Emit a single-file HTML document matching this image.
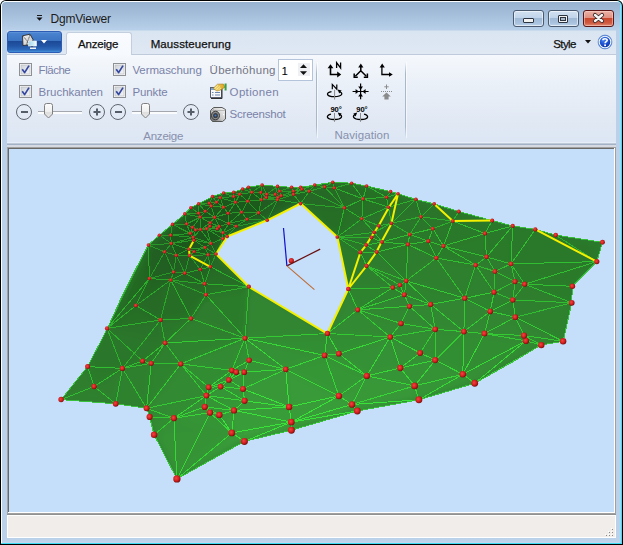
<!DOCTYPE html>
<html><head><meta charset="utf-8">
<style>
html,body{margin:0;padding:0;}
body{width:623px;height:545px;overflow:hidden;position:relative;background:#fff;font-family:"Liberation Sans",sans-serif;}
.a{position:absolute;}
.t{position:absolute;white-space:nowrap;font-family:"Liberation Sans",sans-serif;}
svg{position:absolute;overflow:visible;}
</style></head><body>
<!-- window frame -->
<div class="a" style="left:0;top:0;width:623px;height:545px;background:#000;border-radius:6px 6px 0 0;"></div>
<div class="a" style="left:1px;top:1px;width:621px;height:543px;background:#3fdcf6;border-radius:5px 5px 0 0;"></div>
<div class="a" style="left:1px;top:1px;width:620px;height:542px;background:#fbfdff;border-radius:5px 5px 0 0;"></div>
<div class="a" style="left:2px;top:2px;width:619px;height:541px;border-radius:4px 4px 0 0;background:linear-gradient(to bottom,#97b2cf 0px,#a9c2de 16px,#b8d0e9 28px,#bad1e9 60px,#bbd1e9 520px,#bcd2ea 539px,#c4d8ee 541px);"></div>
<div class="a" style="left:620px;top:5px;width:1px;height:538px;background:#a9d3f2;"></div>

<!-- quick access glyph -->
<div class="a" style="left:37px;top:15px;width:5px;height:1px;background:#1a1a1a;"></div>
<svg style="left:36px;top:17px" width="8" height="5"><path d="M0.5 0.5 H6.5 L3.5 3.8 Z" fill="#111"/></svg>

<!-- caption buttons -->
<div class="a" style="left:513px;top:10px;width:29px;height:15px;border:1px solid #4a5a70;border-radius:3px;background:linear-gradient(to bottom,#d2e1f0 0,#c0d4ea 7px,#9fb9d6 7px,#a9c2de 12px,#bcd3ea 15px);box-shadow:inset 0 0 0 1px rgba(255,255,255,0.55);"></div>
<div class="a" style="left:523px;top:18px;width:9px;height:3px;border:1px solid #2c3440;border-radius:1px;background:#f2f2f2;"></div>
<div class="a" style="left:548px;top:10px;width:29px;height:15px;border:1px solid #4a5a70;border-radius:3px;background:linear-gradient(to bottom,#d2e1f0 0,#c0d4ea 7px,#9fb9d6 7px,#a9c2de 12px,#bcd3ea 15px);box-shadow:inset 0 0 0 1px rgba(255,255,255,0.55);"></div>
<div class="a" style="left:558px;top:15px;width:8px;height:6px;border:1px solid #2c3440;border-radius:1px;background:#f2f2f2;"></div>
<div class="a" style="left:560px;top:17px;width:4px;height:2px;border:1px solid #2c3440;background:#aab8c8;"></div>
<div class="a" style="left:583px;top:10px;width:29px;height:15px;border:1px solid #5a1616;border-radius:3px;background:linear-gradient(to bottom,#eab2a6 0,#df8f80 7px,#c8462c 7px,#cf5a40 12px,#e28a74 15px);box-shadow:inset 0 0 0 1px rgba(255,220,210,0.5);"></div>
<svg style="left:592px;top:13px" width="13" height="10"><path d="M3 2 L10 8 M10 2 L3 8" stroke="#3a2a2a" stroke-width="4.2" stroke-linecap="round"/><path d="M3 2 L10 8 M10 2 L3 8" stroke="#f6f6f6" stroke-width="2.4" stroke-linecap="round"/></svg>

<!-- tab row -->
<div class="a" style="left:7px;top:30px;width:609px;height:1px;background:#c9daec;"></div>
<div class="a" style="left:7px;top:31px;width:609px;height:24px;background:linear-gradient(to bottom,#dae5f2,#dfe8f3);"></div>
<div class="a" style="left:7px;top:54px;width:609px;height:1px;background:#bfcbdb;"></div>
<!-- app button -->
<div class="a" style="left:7px;top:31px;width:53px;height:20px;border:1px solid #2c5cb4;border-radius:3px;background:linear-gradient(to bottom,#6a9ede 0,#4a84d0 1px,#3a74c2 9px,#1c4996 9px,#2256a6 14px,#2f6cbc 18px,#4592dc 20px);"></div>
<svg style="left:18px;top:31px" width="22" height="22">
 <defs><linearGradient id="envg" x1="0" y1="0" x2="1" y2="1"><stop offset="0" stop-color="#f4f4f4"/><stop offset="1" stop-color="#c4c4c4"/></linearGradient>
 <linearGradient id="mong" x1="0" y1="0" x2="1" y2="0"><stop offset="0" stop-color="#a8d8ee"/><stop offset="0.6" stop-color="#c8ecf8"/><stop offset="1" stop-color="#ffffff"/></linearGradient></defs>
 <path d="M4.5 4.8 L12 3.2 L15 8.5 L14 13.5 L5 14.5 Z" fill="url(#envg)" stroke="#2a2a2a" stroke-width="0.9"/>
 <path d="M5.5 5.5 L11 12.5 M12 4 L8.5 13.5" stroke="#3a3a3a" stroke-width="0.8" stroke-dasharray="1.2 0.6"/>
 <rect x="10.5" y="10" width="8" height="5" fill="url(#mong)" stroke="#f0f0f0" stroke-width="0.6"/>
 <path d="M14 15 V16.5" stroke="#333" stroke-width="1"/>
 <rect x="12" y="16.5" width="6" height="1.5" fill="#f4f4f4"/>
</svg>
<svg style="left:41px;top:40px" width="7" height="4"><path d="M0 0 H6 L3 3.5 Z" fill="#fff"/></svg>
<!-- selected tab -->
<div class="a" style="left:66px;top:32px;width:64px;height:23px;border:1px solid #c3cfdf;border-bottom:none;border-radius:3px 3px 0 0;background:linear-gradient(to bottom,#f9fbfe,#f6f9fd);"></div>
<!-- style dropdown + help -->
<svg style="left:585px;top:40px" width="7" height="4"><path d="M0 0 H6 L3 3.5 Z" fill="#111"/></svg>
<svg style="left:597px;top:34px" width="16" height="16">
 <defs><radialGradient id="hg" cx="0.4" cy="0.3" r="0.75"><stop offset="0" stop-color="#4a86f0"/><stop offset="0.55" stop-color="#1c4fd0"/><stop offset="1" stop-color="#0a2c9a"/></radialGradient></defs>
 <circle cx="8" cy="8" r="6.9" fill="#2f66c8" stroke="#5a86d0" stroke-width="0.8"/>
 <circle cx="8" cy="8" r="5.8" fill="url(#hg)" stroke="#f4f8ff" stroke-width="1.1"/>
 <path d="M5.9 6.2 C5.9 4.2 10.2 4.2 10.2 6.2 C10.2 7.6 8.1 7.7 8.1 9.3" stroke="#fff" stroke-width="1.6" fill="none"/>
 <rect x="7.2" y="10.4" width="1.8" height="1.7" fill="#fff"/>
</svg>

<!-- ribbon body -->
<div class="a" style="left:7px;top:55px;width:609px;height:88px;background:linear-gradient(to bottom,#f5f8fc 0,#eaf0f8 30px,#e0e8f4 70px,#dce6f4 88px);"></div>
<div class="a" style="left:66px;top:54px;width:64px;height:1px;background:#f6f9fd;"></div>
<div class="a" style="left:7px;top:142px;width:609px;height:1px;background:#e6eef9;"></div>
<div class="a" style="left:7px;top:143px;width:609px;height:1px;background:#bfcad9;"></div>
<div class="a" style="left:7px;top:144px;width:609px;height:1px;background:#a3b2c6;"></div>
<div class="a" style="left:7px;top:145px;width:609px;height:2px;background:#d6dae2;"></div>
<!-- group separators -->
<div class="a" style="left:316px;top:62px;width:1px;height:76px;background:linear-gradient(to bottom,rgba(160,178,200,0),#a8b8cc 15%,#a8b8cc 85%,rgba(160,178,200,0));"></div>
<div class="a" style="left:317px;top:62px;width:1px;height:76px;background:rgba(255,255,255,0.6);"></div>
<div class="a" style="left:405px;top:62px;width:1px;height:76px;background:linear-gradient(to bottom,rgba(160,178,200,0),#a8b8cc 15%,#a8b8cc 85%,rgba(160,178,200,0));"></div>
<div class="a" style="left:406px;top:62px;width:1px;height:76px;background:rgba(255,255,255,0.6);"></div>

<!-- checkboxes -->
<svg style="left:19px;top:63px" width="13" height="13"><use href="#cb"/></svg>
<svg style="left:19px;top:85px" width="13" height="13"><use href="#cb"/></svg>
<svg style="left:113px;top:63px" width="13" height="13"><use href="#cb"/></svg>
<svg style="left:113px;top:85px" width="13" height="13"><use href="#cb"/></svg>
<svg width="0" height="0" style="left:0;top:0">
 <defs>
  <linearGradient id="cbg" x1="0" y1="0" x2="1" y2="1"><stop offset="0" stop-color="#cfd3d8"/><stop offset="1" stop-color="#f4f5f6"/></linearGradient>
  <g id="cb">
   <rect x="0.5" y="0.5" width="12" height="12" fill="#fafafa" stroke="#8e9094"/>
   <rect x="2" y="2" width="9" height="9" fill="url(#cbg)" stroke="#b5b8bd" stroke-width="0.6"/>
   <path d="M3.2 6.3 L5.6 9.6 L10 2.6" stroke="#3447a0" stroke-width="1.7" fill="none" stroke-linejoin="round"/>
  </g>
  <g id="minus"><circle cx="8" cy="8" r="7.5" fill="none" stroke="#5f6670" stroke-width="1"/><rect x="5" y="7" width="7" height="2" fill="#555d68"/></g>
  <g id="plus"><circle cx="8" cy="8" r="7.5" fill="none" stroke="#5f6670" stroke-width="1"/><rect x="4.5" y="7" width="7" height="2" fill="#555d68"/><rect x="7" y="4.5" width="2" height="7" fill="#555d68"/></g>
  <linearGradient id="thg" x1="0" y1="0" x2="0" y2="1"><stop offset="0" stop-color="#fcfcfc"/><stop offset="0.55" stop-color="#f0f0f0"/><stop offset="0.6" stop-color="#dedede"/><stop offset="1" stop-color="#e8e8e8"/></linearGradient>
  <g id="thumb"><path d="M0.5 2.5 Q0.5 0.5 2.5 0.5 H6.5 Q8.5 0.5 8.5 2.5 V11 L4.5 15 L0.5 11 Z" fill="url(#thg)" stroke="#7f7f7f" stroke-width="1"/></g>
 </defs>
</svg>
<!-- zoom rows -->
<svg style="left:16px;top:104px" width="16" height="16"><use href="#minus"/></svg>
<div class="a" style="left:38px;top:111px;width:44px;height:1px;background:#a4a8ae;"></div>
<div class="a" style="left:38px;top:112px;width:44px;height:2px;background:#fafbfc;"></div>
<svg style="left:44px;top:103px" width="9" height="16"><use href="#thumb"/></svg>
<svg style="left:89px;top:104px" width="16" height="16"><use href="#plus"/></svg>
<svg style="left:110px;top:104px" width="16" height="16"><use href="#minus"/></svg>
<div class="a" style="left:132px;top:111px;width:45px;height:1px;background:#a4a8ae;"></div>
<div class="a" style="left:132px;top:112px;width:45px;height:2px;background:#fafbfc;"></div>
<svg style="left:141px;top:103px" width="9" height="16"><use href="#thumb"/></svg>
<svg style="left:183px;top:104px" width="16" height="16"><use href="#plus"/></svg>

<!-- spin box -->
<div class="a" style="left:278px;top:59px;width:33px;height:20px;border:1px solid #b4c4da;background:#fff;"></div>
<div class="a" style="left:298px;top:63px;width:12px;height:13px;background:#eef0f4;"></div>
<svg style="left:300px;top:64px" width="8" height="12"><path d="M3.5 0.3 L7 4 H0 Z" fill="#111"/><path d="M0 7.3 H7 L3.5 11 Z" fill="#111"/></svg>

<!-- options icon -->
<svg style="left:209px;top:83px" width="19" height="17">
 <defs><linearGradient id="handg" x1="0" y1="0" x2="1" y2="0"><stop offset="0" stop-color="#f6e27a"/><stop offset="1" stop-color="#d8a020"/></linearGradient></defs>
 <rect x="1.5" y="4.5" width="11" height="10" fill="#f8f8f8" stroke="#5a6070" stroke-width="1"/>
 <path d="M13 5 V15.5 H2" stroke="#303030" stroke-width="1" fill="none"/>
 <rect x="2" y="5" width="10" height="2" fill="#7aa4dc"/>
 <path d="M3 9.5 H4.5 M6 9.5 H11 M3 12 H4.5 M6 12 H11" stroke="#6b88b0" stroke-width="1"/>
 <path d="M4 5.5 L8.5 1.2 L14.5 1 L16 4.2 L11.5 7 L8 8 Z" fill="url(#handg)" stroke="#a07818" stroke-width="0.6"/>
 <path d="M6 5 L9 2.5 M7.5 6.5 L11 3.5 M9.5 7 L12 5" stroke="#fff6c0" stroke-width="0.7"/>
 <rect x="15.6" y="0.5" width="2" height="7" fill="#3aa048"/>
</svg>
<!-- camera icon -->
<svg style="left:209px;top:106px" width="18" height="17">
 <defs><linearGradient id="camg" x1="1" y1="0" x2="0" y2="1"><stop offset="0" stop-color="#f8f8f8"/><stop offset="0.55" stop-color="#c8c8c8"/><stop offset="1" stop-color="#606060"/></linearGradient></defs>
 <path d="M1.5 4.5 L4.5 1.5 H13 L16.5 3.5 V13 L13.5 15.5 H3.5 L1.5 13 Z" fill="url(#camg)" stroke="#4a4a4a" stroke-width="0.9"/>
 <path d="M4.5 1.5 V4.5 H16.5 M4.5 4.5 L1.5 4.5" stroke="#9a9a9a" stroke-width="0.6" fill="none"/>
 <ellipse cx="6.5" cy="9.5" rx="4" ry="4.3" fill="#8a8a8a" stroke="#303030" stroke-width="0.9"/>
 <ellipse cx="6.5" cy="9.5" rx="2.4" ry="2.6" fill="#3a3e44"/>
 <circle cx="6.5" cy="9.5" r="1" fill="#3a7ad0"/>
 <rect x="14" y="8" width="1.2" height="1.2" fill="#fff"/>
</svg>

<!-- navigation icons -->
<svg style="left:0;top:0" width="623" height="545" fill="none" stroke="#000">
 <!-- icon1 -->
 <path d="M330.5 66.5 V74.5 H338.5" stroke-width="1.6"/>
 <path d="M327.6 68.2 L330.5 64.2 L333.4 68.2 Z M337.2 71.6 L341.2 74.5 L337.2 77.4 Z" fill="#000" stroke="none"/>
 <path d="M336.6 68 V62.6 L340.6 68 V62.6" stroke-width="1.3"/>
 <!-- icon2 -->
 <path d="M360.8 66 V70.8 L355.3 76.3 M360.8 70.8 L366.3 76.3" stroke-width="1.5"/>
 <path d="M358.2 67.4 L360.8 63.6 L363.4 67.4 Z" fill="#000" stroke="none"/>
 <path d="M354.2 73.6 V77.2 H357.8 M367.4 73.6 V77.2 H363.8" stroke-width="1.5"/>
 <!-- icon3 -->
 <path d="M381.9 66.5 V74.5 H390" stroke-width="1.3"/>
 <path d="M379.6 67.6 L382.2 63.6 L384.8 67.6 Z M389 72.2 L392.8 74.5 L389 76.8 Z" fill="#000" stroke="none"/>
 <!-- icon4 -->
 <path d="M332.3 89.2 V84.4 L336.8 89.2 V84.4" stroke-width="1.2"/>
 <path d="M331.5 91.6 C325.5 92.5 326 96.6 334.5 96.6 C343 96.6 343.2 92.5 339.5 91.8" stroke-width="1.3"/>
 <path d="M337.6 89.6 L341.6 90.6 L339.2 93.6 Z" fill="#000" stroke="none"/>
 <path d="M334.6 89.8 V99.5" stroke="#8a8a8a" stroke-width="1"/>
 <!-- icon5 -->
 <path d="M360.6 83.6 V99.2 M352.6 91.5 H368.6" stroke-width="1.2"/>
 <path d="M358.2 86.6 H363 L360.6 89.8 Z M358.2 96.4 H363 L360.6 93.2 Z M355.6 89.1 V93.9 L358.8 91.5 Z M365.6 89.1 V93.9 L362.4 91.5 Z" fill="#000" stroke="none"/>
 <!-- icon6 -->
 <path d="M386.5 84.5 V89 M384.3 86.8 H388.7" stroke="#8c8c8c" stroke-width="1"/>
 <path d="M381 91.5 H392" stroke="#8c8c8c" stroke-width="1" stroke-dasharray="1 1"/>
 <path d="M386.5 92.6 L390.8 96.4 H388.6 V99.4 H384.4 V96.4 H382.2 Z" fill="#8a8a8a" stroke="none"/>
 <!-- icon7 -->
 <text x="330.5" y="111.8" font-family="Liberation Sans" font-size="7.6" font-weight="bold" fill="#000" stroke="none" letter-spacing="-0.1">90°</text>
 <path d="M331 114.2 C325.5 115.2 326 119.5 334.3 119.5 C342.6 119.5 343 115.4 339.4 114.4" stroke-width="1.3"/>
 <path d="M337.8 112.4 L341.6 113.4 L339.4 116.4 Z" fill="#000" stroke="none"/>
 <path d="M334.5 113 V121.8" stroke="#8a8a8a" stroke-width="1"/>
 <!-- icon8 -->
 <text x="356.3" y="111.8" font-family="Liberation Sans" font-size="7.6" font-weight="bold" fill="#000" stroke="none" letter-spacing="-0.1">90°</text>
 <path d="M364 114.2 C369.5 115.2 369 119.5 360.7 119.5 C352.4 119.5 352 115.4 355.6 114.4" stroke-width="1.3"/>
 <path d="M357.2 112.4 L353.4 113.4 L355.6 116.4 Z" fill="#000" stroke="none"/>
 <path d="M360.5 113 V121.8" stroke="#8a8a8a" stroke-width="1"/>
</svg>

<!-- viewport border -->
<div class="a" style="left:7px;top:147px;width:609px;height:367px;background:#a0a0a0;"></div>
<div class="a" style="left:8px;top:148px;width:607px;height:365px;background:#fff;"></div>
<div class="a" style="left:8px;top:148px;width:606px;height:364px;background:#696969;"></div>
<div class="a" style="left:9px;top:149px;width:605px;height:363px;background:#e3e3e3;"></div>
<div class="a" style="left:9px;top:149px;width:605px;height:363px;background:#c5dffb;overflow:hidden;">
<svg style="left:0;top:0" width="605" height="363" viewBox="0 0 605 363">
<defs>
<clipPath id="mc"><path d="M52.1,250.6 L78.6,217.6 L98.5,179.4 L113.5,146.0 L122.7,127.7 L139.5,95.8 L150.4,86.2 L163.4,75.4 L176.0,64.9 L181.7,58.6 L189.4,54.9 L203.5,47.6 L214.6,44.0 L224.7,43.3 L233.6,40.1 L239.4,38.2 L253.1,36.1 L268.5,37.4 L282.6,38.3 L291.6,38.3 L305.7,36.1 L323.7,33.2 L342.6,34.2 L357.6,37.0 L381.6,42.6 L389.0,44.7 L406.9,50.4 L425.2,54.9 L449.8,62.5 L483.2,71.6 L503.7,76.9 L526.3,80.4 L546.7,86.1 L593.5,93.3 L587.8,112.6 L563.4,137.3 L562.7,153.8 L556.4,182.7 L554.1,192.3 L531.8,196.1 L507.0,211.0 L465.7,234.3 L409.9,250.8 L348.3,262.0 L282.4,281.2 L235.4,292.4 L167.9,329.9 L145.1,285.8 L140.6,267.9 L137.6,259.3 L106.7,254.8 Z M291.7,54.5 L328.4,88.0 L339.3,140.0 L318.2,184.7 L239.9,137.8 L207.0,105.0 L218.2,87.5 L258.2,71.3 Z" clip-rule="evenodd" shape-rendering="crispEdges"/></clipPath>
<linearGradient id="gbase" gradientUnits="userSpaceOnUse" x1="0" y1="40" x2="0" y2="330">
<stop offset="0" stop-color="#24622a"/><stop offset="0.35" stop-color="#2b7a2e"/><stop offset="1" stop-color="#36903a"/></linearGradient>
<radialGradient id="gdark" gradientUnits="userSpaceOnUse" cx="230" cy="55" r="120"><stop offset="0" stop-color="#16461a" stop-opacity="0.9"/><stop offset="1" stop-color="#16461a" stop-opacity="0"/></radialGradient>
<radialGradient id="glight" gradientUnits="userSpaceOnUse" cx="390" cy="210" r="170"><stop offset="0" stop-color="#45a845" stop-opacity="0.7"/><stop offset="1" stop-color="#45a845" stop-opacity="0"/></radialGradient>
<radialGradient id="gright" gradientUnits="userSpaceOnUse" cx="540" cy="130" r="90"><stop offset="0" stop-color="#1e5c22" stop-opacity="0.6"/><stop offset="1" stop-color="#1e5c22" stop-opacity="0"/></radialGradient>
</defs>
<g clip-path="url(#mc)">
<filter id="fb" filterUnits="userSpaceOnUse" x="0" y="0" width="605" height="363"><feGaussianBlur stdDeviation="4"/></filter>
<g filter="url(#fb)">
<rect x="0" y="0" width="605" height="363" fill="#2e7e30"/>
<path d="M222.8,283.9L167.9,329.9L145.1,285.8Z" fill="#359335" stroke="#359335" stroke-width="0.6"/><path d="M222.8,221.4L171.8,214.9L236.0,189.2Z" fill="#328b32" stroke="#328b32" stroke-width="0.6"/><path d="M477.5,107.9L502.0,114.9L486.0,122.5Z" fill="#2d7d2d" stroke="#2d7d2d" stroke-width="0.6"/><path d="M126.9,156.5L151.6,170.9L98.1,179.4Z" fill="#276f27" stroke="#276f27" stroke-width="0.6"/><path d="M140.4,129.5L98.1,179.4L139.4,96.1Z" fill="#246724" stroke="#246724" stroke-width="0.6"/><path d="M140.4,129.5L126.9,156.5L98.1,179.4Z" fill="#266c26" stroke="#266c26" stroke-width="0.6"/><path d="M291.6,54.6L335.4,58.9L328.3,88.0Z" fill="#276d27" stroke="#276d27" stroke-width="0.6"/><path d="M351.4,103.4L339.3,140.0L328.3,88.0Z" fill="#2c7a2c" stroke="#2c7a2c" stroke-width="0.6"/><path d="M276.7,220.3L240.1,211.3L236.0,189.2Z" fill="#349034" stroke="#349034" stroke-width="0.6"/><path d="M240.1,211.3L222.8,221.4L236.0,189.2Z" fill="#338e33" stroke="#338e33" stroke-width="0.6"/><path d="M164.9,269.2L222.8,283.9L145.1,285.8Z" fill="#349134" stroke="#349134" stroke-width="0.6"/><path d="M222.8,221.4L199.7,238.3L171.8,214.9Z" fill="#338d33" stroke="#338d33" stroke-width="0.6"/><path d="M199.7,238.3L197.4,246.6L171.8,214.9Z" fill="#338d33" stroke="#338d33" stroke-width="0.6"/><path d="M454.9,182.6L426.2,211.1L426.2,180.3Z" fill="#328c32" stroke="#328c32" stroke-width="0.6"/><path d="M454.9,182.6L481.2,162.4L475.5,184.6Z" fill="#318831" stroke="#318831" stroke-width="0.6"/><path d="M409.9,250.8L453.8,225.3L465.7,234.3Z" fill="#369436" stroke="#369436" stroke-width="0.6"/><path d="M453.8,225.3L516.9,191.9L465.7,234.3Z" fill="#349034" stroke="#349034" stroke-width="0.6"/><path d="M516.9,191.9L453.8,225.3L475.5,184.6Z" fill="#328c32" stroke="#328c32" stroke-width="0.6"/><path d="M454.9,182.6L453.8,225.3L426.2,211.1Z" fill="#338e33" stroke="#338e33" stroke-width="0.6"/><path d="M453.8,225.3L454.9,182.6L475.5,184.6Z" fill="#328c32" stroke="#328c32" stroke-width="0.6"/><path d="M197.0,145.8L236.0,189.2L182.0,169.5Z" fill="#2d7d2d" stroke="#2d7d2d" stroke-width="0.6"/><path d="M197.0,145.8L239.8,137.7L236.0,189.2Z" fill="#2c7c2c" stroke="#2c7c2c" stroke-width="0.6"/><path d="M381.2,188.0L391.3,219.0L357.8,226.9Z" fill="#349134" stroke="#349134" stroke-width="0.6"/><path d="M426.2,211.1L411.1,204.0L426.2,180.3Z" fill="#338e33" stroke="#338e33" stroke-width="0.6"/><path d="M411.1,204.0L381.2,188.0L426.2,180.3Z" fill="#328c32" stroke="#328c32" stroke-width="0.6"/><path d="M391.3,219.0L411.1,204.0L426.2,211.1Z" fill="#349034" stroke="#349034" stroke-width="0.6"/><path d="M411.1,204.0L391.3,219.0L381.2,188.0Z" fill="#348f34" stroke="#348f34" stroke-width="0.6"/><path d="M329.9,204.7L381.2,188.0L357.8,226.9Z" fill="#349134" stroke="#349134" stroke-width="0.6"/><path d="M427.3,109.0L397.2,131.9L398.9,95.4Z" fill="#2d7d2d" stroke="#2d7d2d" stroke-width="0.6"/><path d="M502.0,114.9L587.8,112.6L563.4,137.3Z" fill="#2b7a2b" stroke="#2b7a2b" stroke-width="0.6"/><path d="M587.8,112.6L546.7,86.1L593.5,93.3Z" fill="#2a772a" stroke="#2a772a" stroke-width="0.6"/><path d="M546.7,86.1L587.8,112.6L502.0,114.9Z" fill="#2b782b" stroke="#2b782b" stroke-width="0.6"/><path d="M503.7,76.9L502.0,114.9L477.5,107.9Z" fill="#2c7a2c" stroke="#2c7a2c" stroke-width="0.6"/><path d="M151.6,170.9L156.1,194.0L98.1,179.4Z" fill="#297329" stroke="#297329" stroke-width="0.6"/><path d="M142.2,214.3L156.1,194.0L171.8,214.9Z" fill="#2d7f2d" stroke="#2d7f2d" stroke-width="0.6"/><path d="M156.1,194.0L151.6,170.9L182.0,169.5Z" fill="#2a772a" stroke="#2a772a" stroke-width="0.6"/><path d="M236.0,189.2L156.1,194.0L182.0,169.5Z" fill="#2e802e" stroke="#2e802e" stroke-width="0.6"/><path d="M171.8,214.9L156.1,194.0L236.0,189.2Z" fill="#2f842f" stroke="#2f842f" stroke-width="0.6"/><path d="M335.4,58.9L352.8,69.8L328.3,88.0Z" fill="#287128" stroke="#287128" stroke-width="0.6"/><path d="M352.8,69.8L379.4,58.2L369.8,76.8Z" fill="#297329" stroke="#297329" stroke-width="0.6"/><path d="M300.2,42.2L335.4,58.9L291.6,54.6Z" fill="#256825" stroke="#256825" stroke-width="0.6"/><path d="M300.2,42.2L291.6,54.6L284.5,45.4Z" fill="#236323" stroke="#236323" stroke-width="0.6"/><path d="M323.7,33.2L342.6,34.2L325.3,39.0Z" fill="#256925" stroke="#256925" stroke-width="0.6"/><path d="M362.5,88.5L365.2,83.3L373.0,93.0Z" fill="#2a772a" stroke="#2a772a" stroke-width="0.6"/><path d="M365.2,83.3L352.8,69.8L369.8,76.8Z" fill="#297429" stroke="#297429" stroke-width="0.6"/><path d="M365.2,83.3L362.5,88.5L328.3,88.0Z" fill="#2a762a" stroke="#2a762a" stroke-width="0.6"/><path d="M352.8,69.8L365.2,83.3L328.3,88.0Z" fill="#297429" stroke="#297429" stroke-width="0.6"/><path d="M362.5,88.5L357.2,96.1L328.3,88.0Z" fill="#2a762a" stroke="#2a762a" stroke-width="0.6"/><path d="M357.2,96.1L351.4,103.4L328.3,88.0Z" fill="#2b772b" stroke="#2b772b" stroke-width="0.6"/><path d="M357.2,96.1L362.5,88.5L373.0,93.0Z" fill="#2b782b" stroke="#2b782b" stroke-width="0.6"/><path d="M351.4,103.4L357.6,116.9L339.3,140.0Z" fill="#2d7d2d" stroke="#2d7d2d" stroke-width="0.6"/><path d="M379.4,58.2L382.4,74.3L369.8,76.8Z" fill="#297429" stroke="#297429" stroke-width="0.6"/><path d="M382.4,74.3L365.2,83.3L369.8,76.8Z" fill="#2a752a" stroke="#2a752a" stroke-width="0.6"/><path d="M365.2,83.3L382.4,74.3L373.0,93.0Z" fill="#2a762a" stroke="#2a762a" stroke-width="0.6"/><path d="M443.8,72.1L449.8,62.5L483.2,71.6Z" fill="#2a762a" stroke="#2a762a" stroke-width="0.6"/><path d="M449.8,62.5L443.8,72.1L425.2,54.9Z" fill="#297429" stroke="#297429" stroke-width="0.6"/><path d="M475.9,84.5L443.8,72.1L483.2,71.6Z" fill="#2a772a" stroke="#2a772a" stroke-width="0.6"/><path d="M503.7,76.9L475.9,84.5L483.2,71.6Z" fill="#2a772a" stroke="#2a772a" stroke-width="0.6"/><path d="M475.9,84.5L503.7,76.9L477.5,107.9Z" fill="#2b792b" stroke="#2b792b" stroke-width="0.6"/><path d="M113.4,219.4L78.6,217.6L98.1,179.4Z" fill="#2a762a" stroke="#2a762a" stroke-width="0.6"/><path d="M240.1,211.3L235.2,223.2L222.8,221.4Z" fill="#349134" stroke="#349134" stroke-width="0.6"/><path d="M235.2,223.2L276.7,220.3L234.0,239.9Z" fill="#369536" stroke="#369536" stroke-width="0.6"/><path d="M235.2,223.2L240.1,211.3L276.7,220.3Z" fill="#359335" stroke="#359335" stroke-width="0.6"/><path d="M140.6,267.9L164.9,269.2L145.1,285.8Z" fill="#328c32" stroke="#328c32" stroke-width="0.6"/><path d="M235.6,251.8L225.0,261.4L197.4,246.6Z" fill="#369736" stroke="#369736" stroke-width="0.6"/><path d="M164.9,269.2L201.0,263.7L222.8,283.9Z" fill="#369536" stroke="#369536" stroke-width="0.6"/><path d="M219.9,230.9L199.7,238.3L222.8,221.4Z" fill="#349134" stroke="#349134" stroke-width="0.6"/><path d="M219.9,230.9L235.2,223.2L234.0,239.9Z" fill="#359435" stroke="#359435" stroke-width="0.6"/><path d="M516.9,191.9L532.3,196.1L465.7,234.3Z" fill="#338c33" stroke="#338c33" stroke-width="0.6"/><path d="M427.3,109.0L455.8,149.2L397.2,131.9Z" fill="#2e802e" stroke="#2e802e" stroke-width="0.6"/><path d="M454.9,182.6L455.8,149.2L481.2,162.4Z" fill="#308630" stroke="#308630" stroke-width="0.6"/><path d="M481.2,162.4L506.3,168.2L475.5,184.6Z" fill="#308630" stroke="#308630" stroke-width="0.6"/><path d="M453.8,225.3L405.6,236.9L426.2,211.1Z" fill="#359235" stroke="#359235" stroke-width="0.6"/><path d="M405.6,236.9L453.8,225.3L409.9,250.8Z" fill="#369536" stroke="#369536" stroke-width="0.6"/><path d="M405.6,236.9L391.3,219.0L426.2,211.1Z" fill="#359335" stroke="#359335" stroke-width="0.6"/><path d="M391.3,219.0L405.6,236.9L357.8,226.9Z" fill="#369436" stroke="#369436" stroke-width="0.6"/><path d="M218.2,87.5L207.0,105.0L213.8,89.7Z" fill="#205b20" stroke="#205b20" stroke-width="0.6"/><path d="M201.4,117.8L207.0,105.0L239.8,137.7Z" fill="#256825" stroke="#256825" stroke-width="0.6"/><path d="M140.4,129.5L161.7,131.1L126.9,156.5Z" fill="#246524" stroke="#246524" stroke-width="0.6"/><path d="M161.7,131.1L151.6,170.9L126.9,156.5Z" fill="#266a26" stroke="#266a26" stroke-width="0.6"/><path d="M151.6,170.9L161.7,131.1L182.0,169.5Z" fill="#276e27" stroke="#276e27" stroke-width="0.6"/><path d="M161.7,131.1L197.0,145.8L182.0,169.5Z" fill="#276e27" stroke="#276e27" stroke-width="0.6"/><path d="M195.6,134.8L161.7,131.1L175.8,124.2Z" fill="#236323" stroke="#236323" stroke-width="0.6"/><path d="M161.7,131.1L195.6,134.8L197.0,145.8Z" fill="#256925" stroke="#256925" stroke-width="0.6"/><path d="M195.6,134.8L201.4,117.8L239.8,137.7Z" fill="#276d27" stroke="#276d27" stroke-width="0.6"/><path d="M197.0,145.8L195.6,134.8L239.8,137.7Z" fill="#287128" stroke="#287128" stroke-width="0.6"/><path d="M315.6,206.4L329.9,204.7L357.8,226.9Z" fill="#359335" stroke="#359335" stroke-width="0.6"/><path d="M315.6,206.4L276.7,220.3L236.0,189.2Z" fill="#349134" stroke="#349134" stroke-width="0.6"/><path d="M526.3,80.4L546.7,86.1L502.0,114.9Z" fill="#2b782b" stroke="#2b782b" stroke-width="0.6"/><path d="M503.7,76.9L526.3,80.4L502.0,114.9Z" fill="#2b782b" stroke="#2b782b" stroke-width="0.6"/><path d="M222.8,283.9L235.4,292.4L167.9,329.9Z" fill="#389b38" stroke="#389b38" stroke-width="0.6"/><path d="M225.0,261.4L282.3,273.1L222.8,283.9Z" fill="#399d39" stroke="#399d39" stroke-width="0.6"/><path d="M282.3,273.1L235.4,292.4L222.8,283.9Z" fill="#3a9f3a" stroke="#3a9f3a" stroke-width="0.6"/><path d="M235.4,292.4L282.3,273.1L282.4,281.2Z" fill="#3aa13a" stroke="#3aa13a" stroke-width="0.6"/><path d="M282.4,281.2L282.3,273.1L348.3,262.0Z" fill="#3a9f3a" stroke="#3a9f3a" stroke-width="0.6"/><path d="M163.5,75.4L175.8,64.9L177.6,75.0Z" fill="#205a20" stroke="#205a20" stroke-width="0.6"/><path d="M180.6,106.6L167.3,106.4L179.9,100.2Z" fill="#1f591f" stroke="#1f591f" stroke-width="0.6"/><path d="M167.3,106.4L180.6,106.6L175.8,124.2Z" fill="#205c20" stroke="#205c20" stroke-width="0.6"/><path d="M354.1,49.9L352.8,69.8L335.4,58.9Z" fill="#287028" stroke="#287028" stroke-width="0.6"/><path d="M352.8,69.8L354.1,49.9L379.4,58.2Z" fill="#287128" stroke="#287128" stroke-width="0.6"/><path d="M354.1,49.9L342.6,34.2L357.6,37.0Z" fill="#266c26" stroke="#266c26" stroke-width="0.6"/><path d="M354.1,49.9L335.4,58.9L325.3,39.0Z" fill="#276d27" stroke="#276d27" stroke-width="0.6"/><path d="M342.6,34.2L354.1,49.9L325.3,39.0Z" fill="#266b26" stroke="#266b26" stroke-width="0.6"/><path d="M315.7,37.9L300.2,42.2L305.7,36.1Z" fill="#246624" stroke="#246624" stroke-width="0.6"/><path d="M315.7,37.9L323.7,33.2L325.3,39.0Z" fill="#256825" stroke="#256825" stroke-width="0.6"/><path d="M323.7,33.2L315.7,37.9L305.7,36.1Z" fill="#246724" stroke="#246724" stroke-width="0.6"/><path d="M335.4,58.9L315.7,37.9L325.3,39.0Z" fill="#266a26" stroke="#266a26" stroke-width="0.6"/><path d="M300.2,42.2L315.7,37.9L335.4,58.9Z" fill="#256925" stroke="#256925" stroke-width="0.6"/><path d="M218.2,87.5L227.2,77.3L258.2,71.3Z" fill="#205c20" stroke="#205c20" stroke-width="0.6"/><path d="M189.6,54.9L181.9,58.7L203.5,47.6Z" fill="#1f581f" stroke="#1f581f" stroke-width="0.6"/><path d="M367.7,103.0L357.2,96.1L373.0,93.0Z" fill="#2b792b" stroke="#2b792b" stroke-width="0.6"/><path d="M357.2,96.1L367.7,103.0L351.4,103.4Z" fill="#2b792b" stroke="#2b792b" stroke-width="0.6"/><path d="M367.7,103.0L357.6,116.9L351.4,103.4Z" fill="#2c7b2c" stroke="#2c7b2c" stroke-width="0.6"/><path d="M367.7,103.0L373.0,93.0L398.9,95.4Z" fill="#2b792b" stroke="#2b792b" stroke-width="0.6"/><path d="M397.2,131.9L367.7,103.0L398.9,95.4Z" fill="#2c7c2c" stroke="#2c7c2c" stroke-width="0.6"/><path d="M357.6,116.9L367.7,103.0L397.2,131.9Z" fill="#2d7d2d" stroke="#2d7d2d" stroke-width="0.6"/><path d="M389.0,44.7L406.9,50.4L379.4,58.2Z" fill="#287128" stroke="#287128" stroke-width="0.6"/><path d="M85.1,237.5L113.4,219.4L106.7,254.8Z" fill="#2d7e2d" stroke="#2d7e2d" stroke-width="0.6"/><path d="M113.4,219.4L85.1,237.5L78.6,217.6Z" fill="#2c7a2c" stroke="#2c7a2c" stroke-width="0.6"/><path d="M85.1,237.5L106.7,254.8L52.1,250.6Z" fill="#2e812e" stroke="#2e812e" stroke-width="0.6"/><path d="M78.6,217.6L85.1,237.5L52.1,250.6Z" fill="#2d7e2d" stroke="#2d7e2d" stroke-width="0.6"/><path d="M133.6,212.0L113.4,219.4L98.1,179.4Z" fill="#2a762a" stroke="#2a762a" stroke-width="0.6"/><path d="M113.4,219.4L133.6,212.0L142.2,214.3Z" fill="#2c7b2c" stroke="#2c7b2c" stroke-width="0.6"/><path d="M156.1,194.0L133.6,212.0L98.1,179.4Z" fill="#2a762a" stroke="#2a762a" stroke-width="0.6"/><path d="M133.6,212.0L156.1,194.0L142.2,214.3Z" fill="#2c7b2c" stroke="#2c7b2c" stroke-width="0.6"/><path d="M113.4,219.4L137.6,259.3L106.7,254.8Z" fill="#2e822e" stroke="#2e822e" stroke-width="0.6"/><path d="M137.6,259.3L113.4,219.4L142.2,214.3Z" fill="#2e802e" stroke="#2e802e" stroke-width="0.6"/><path d="M137.6,259.3L142.2,214.3L171.8,214.9Z" fill="#2f832f" stroke="#2f832f" stroke-width="0.6"/><path d="M197.4,246.6L137.6,259.3L171.8,214.9Z" fill="#328a32" stroke="#328a32" stroke-width="0.6"/><path d="M164.9,269.2L137.6,259.3L197.4,246.6Z" fill="#338c33" stroke="#338c33" stroke-width="0.6"/><path d="M140.6,267.9L137.6,259.3L164.9,269.2Z" fill="#328a32" stroke="#328a32" stroke-width="0.6"/><path d="M225.0,261.4L195.8,257.9L197.4,246.6Z" fill="#369536" stroke="#369536" stroke-width="0.6"/><path d="M195.8,257.9L164.9,269.2L197.4,246.6Z" fill="#349134" stroke="#349134" stroke-width="0.6"/><path d="M195.8,257.9L201.0,263.7L164.9,269.2Z" fill="#349234" stroke="#349234" stroke-width="0.6"/><path d="M210.4,265.9L225.0,261.4L222.8,283.9Z" fill="#379937" stroke="#379937" stroke-width="0.6"/><path d="M201.0,263.7L210.4,265.9L222.8,283.9Z" fill="#379837" stroke="#379837" stroke-width="0.6"/><path d="M210.4,265.9L195.8,257.9L225.0,261.4Z" fill="#369636" stroke="#369636" stroke-width="0.6"/><path d="M195.8,257.9L210.4,265.9L201.0,263.7Z" fill="#369536" stroke="#369536" stroke-width="0.6"/><path d="M211.6,237.6L219.9,230.9L234.0,239.9Z" fill="#359435" stroke="#359435" stroke-width="0.6"/><path d="M219.9,230.9L211.6,237.6L199.7,238.3Z" fill="#359235" stroke="#359235" stroke-width="0.6"/><path d="M199.7,238.3L211.6,237.6L197.4,246.6Z" fill="#349134" stroke="#349134" stroke-width="0.6"/><path d="M235.6,251.8L211.6,237.6L234.0,239.9Z" fill="#369636" stroke="#369636" stroke-width="0.6"/><path d="M211.6,237.6L235.6,251.8L197.4,246.6Z" fill="#369436" stroke="#369436" stroke-width="0.6"/><path d="M235.2,223.2L227.3,223.2L222.8,221.4Z" fill="#349234" stroke="#349234" stroke-width="0.6"/><path d="M227.3,223.2L219.9,230.9L222.8,221.4Z" fill="#349234" stroke="#349234" stroke-width="0.6"/><path d="M219.9,230.9L227.3,223.2L235.2,223.2Z" fill="#359235" stroke="#359235" stroke-width="0.6"/><path d="M455.8,149.2L485.1,143.2L481.2,162.4Z" fill="#2f832f" stroke="#2f832f" stroke-width="0.6"/><path d="M466.6,116.1L455.8,149.2L427.3,109.0Z" fill="#2e7f2e" stroke="#2e7f2e" stroke-width="0.6"/><path d="M466.6,116.1L477.5,107.9L486.0,122.5Z" fill="#2d7d2d" stroke="#2d7d2d" stroke-width="0.6"/><path d="M485.1,143.2L466.6,116.1L486.0,122.5Z" fill="#2d7f2d" stroke="#2d7f2d" stroke-width="0.6"/><path d="M466.6,116.1L485.1,143.2L455.8,149.2Z" fill="#2e812e" stroke="#2e812e" stroke-width="0.6"/><path d="M455.8,149.2L421.7,155.4L397.2,131.9Z" fill="#2f832f" stroke="#2f832f" stroke-width="0.6"/><path d="M400.5,157.3L421.7,155.4L426.2,180.3Z" fill="#308730" stroke="#308730" stroke-width="0.6"/><path d="M421.7,155.4L454.9,182.6L426.2,180.3Z" fill="#318831" stroke="#318831" stroke-width="0.6"/><path d="M421.7,155.4L455.8,149.2L454.9,182.6Z" fill="#308630" stroke="#308630" stroke-width="0.6"/><path d="M515.0,186.5L516.9,191.9L475.5,184.6Z" fill="#318831" stroke="#318831" stroke-width="0.6"/><path d="M506.3,168.2L515.0,186.5L475.5,184.6Z" fill="#308730" stroke="#308730" stroke-width="0.6"/><path d="M515.0,186.5L506.3,168.2L554.1,192.3Z" fill="#308530" stroke="#308530" stroke-width="0.6"/><path d="M532.3,196.1L515.0,186.5L554.1,192.3Z" fill="#318731" stroke="#318731" stroke-width="0.6"/><path d="M515.0,186.5L532.3,196.1L516.9,191.9Z" fill="#318831" stroke="#318831" stroke-width="0.6"/><path d="M506.3,168.2L562.7,153.8L554.1,192.3Z" fill="#2f822f" stroke="#2f822f" stroke-width="0.6"/><path d="M164.6,123.0L161.7,131.1L140.4,129.5Z" fill="#226022" stroke="#226022" stroke-width="0.6"/><path d="M164.6,123.0L167.3,106.4L175.8,124.2Z" fill="#215d21" stroke="#215d21" stroke-width="0.6"/><path d="M161.7,131.1L164.6,123.0L175.8,124.2Z" fill="#226022" stroke="#226022" stroke-width="0.6"/><path d="M191.3,120.4L195.6,134.8L175.8,124.2Z" fill="#236423" stroke="#236423" stroke-width="0.6"/><path d="M195.6,134.8L191.3,120.4L201.4,117.8Z" fill="#246524" stroke="#246524" stroke-width="0.6"/><path d="M180.6,106.6L191.3,120.4L175.8,124.2Z" fill="#215e21" stroke="#215e21" stroke-width="0.6"/><path d="M329.9,204.7L318.4,184.5L381.2,188.0Z" fill="#338e33" stroke="#338e33" stroke-width="0.6"/><path d="M318.4,184.5L348.7,160.8L381.2,188.0Z" fill="#328b32" stroke="#328b32" stroke-width="0.6"/><path d="M315.6,206.4L318.4,184.5L329.9,204.7Z" fill="#349034" stroke="#349034" stroke-width="0.6"/><path d="M318.4,184.5L315.6,206.4L236.0,189.2Z" fill="#338e33" stroke="#338e33" stroke-width="0.6"/><path d="M239.8,137.7L318.4,184.5L236.0,189.2Z" fill="#308630" stroke="#308630" stroke-width="0.6"/><path d="M348.7,160.8L318.4,184.5L339.3,140.0Z" fill="#308730" stroke="#308730" stroke-width="0.6"/><path d="M348.7,160.8L392.0,174.4L381.2,188.0Z" fill="#318a31" stroke="#318a31" stroke-width="0.6"/><path d="M392.0,174.4L348.7,160.8L400.5,157.3Z" fill="#318731" stroke="#318731" stroke-width="0.6"/><path d="M381.2,188.0L392.0,174.4L426.2,180.3Z" fill="#328b32" stroke="#328b32" stroke-width="0.6"/><path d="M392.0,174.4L400.5,157.3L426.2,180.3Z" fill="#318831" stroke="#318831" stroke-width="0.6"/><path d="M383.7,138.6L348.7,160.8L339.3,140.0Z" fill="#2f842f" stroke="#2f842f" stroke-width="0.6"/><path d="M357.6,116.9L383.7,138.6L339.3,140.0Z" fill="#2e802e" stroke="#2e802e" stroke-width="0.6"/><path d="M329.9,246.9L315.6,206.4L357.8,226.9Z" fill="#369636" stroke="#369636" stroke-width="0.6"/><path d="M315.6,206.4L329.9,246.9L276.7,220.3Z" fill="#369636" stroke="#369636" stroke-width="0.6"/><path d="M161.7,86.2L150.4,86.2L163.5,75.4Z" fill="#215d21" stroke="#215d21" stroke-width="0.6"/><path d="M150.4,86.2L162.3,94.5L139.4,96.1Z" fill="#215e21" stroke="#215e21" stroke-width="0.6"/><path d="M162.3,94.5L150.4,86.2L161.7,86.2Z" fill="#205c20" stroke="#205c20" stroke-width="0.6"/><path d="M167.3,106.4L162.3,94.5L179.9,100.2Z" fill="#1f591f" stroke="#1f591f" stroke-width="0.6"/><path d="M162.3,94.5L161.7,86.2L184.2,88.4Z" fill="#1f591f" stroke="#1f591f" stroke-width="0.6"/><path d="M300.2,42.2L292.9,40.3L305.7,36.1Z" fill="#236423" stroke="#236423" stroke-width="0.6"/><path d="M292.9,40.3L291.6,38.3L305.7,36.1Z" fill="#236323" stroke="#236323" stroke-width="0.6"/><path d="M292.9,40.3L300.2,42.2L284.5,45.4Z" fill="#236323" stroke="#236323" stroke-width="0.6"/><path d="M257.8,45.4L268.5,37.4L266.3,45.4Z" fill="#205c20" stroke="#205c20" stroke-width="0.6"/><path d="M268.5,37.4L257.8,45.4L253.1,36.1Z" fill="#205b20" stroke="#205b20" stroke-width="0.6"/><path d="M257.8,45.4L251.8,43.5L253.1,36.1Z" fill="#205a20" stroke="#205a20" stroke-width="0.6"/><path d="M242.9,43.3L251.8,43.5L252.4,50.8Z" fill="#1f5a1f" stroke="#1f5a1f" stroke-width="0.6"/><path d="M239.4,38.2L242.9,43.3L233.6,40.1Z" fill="#1f581f" stroke="#1f581f" stroke-width="0.6"/><path d="M251.8,43.5L242.9,43.3L253.1,36.1Z" fill="#1f591f" stroke="#1f591f" stroke-width="0.6"/><path d="M242.9,43.3L239.4,38.2L253.1,36.1Z" fill="#1f591f" stroke="#1f591f" stroke-width="0.6"/><path d="M272.3,46.7L284.5,42.2L284.5,45.4Z" fill="#226022" stroke="#226022" stroke-width="0.6"/><path d="M284.5,42.2L292.9,40.3L284.5,45.4Z" fill="#226222" stroke="#226222" stroke-width="0.6"/><path d="M291.6,38.3L284.5,42.2L282.6,38.3Z" fill="#226122" stroke="#226122" stroke-width="0.6"/><path d="M292.9,40.3L284.5,42.2L291.6,38.3Z" fill="#226222" stroke="#226222" stroke-width="0.6"/><path d="M268.5,37.4L270.6,42.2L266.3,45.4Z" fill="#215d21" stroke="#215d21" stroke-width="0.6"/><path d="M270.6,42.2L272.3,46.7L266.3,45.4Z" fill="#215e21" stroke="#215e21" stroke-width="0.6"/><path d="M270.6,42.2L268.5,37.4L282.6,38.3Z" fill="#215e21" stroke="#215e21" stroke-width="0.6"/><path d="M284.5,42.2L270.6,42.2L282.6,38.3Z" fill="#226022" stroke="#226022" stroke-width="0.6"/><path d="M270.6,42.2L284.5,42.2L272.3,46.7Z" fill="#215f21" stroke="#215f21" stroke-width="0.6"/><path d="M268.5,50.8L249.6,63.9L252.4,50.8Z" fill="#205c20" stroke="#205c20" stroke-width="0.6"/><path d="M249.6,63.9L268.5,50.8L258.2,71.3Z" fill="#215d21" stroke="#215d21" stroke-width="0.6"/><path d="M268.5,50.8L291.6,54.6L258.2,71.3Z" fill="#226022" stroke="#226022" stroke-width="0.6"/><path d="M291.6,54.6L268.5,50.8L284.5,45.4Z" fill="#226122" stroke="#226122" stroke-width="0.6"/><path d="M268.5,50.8L272.3,46.7L284.5,45.4Z" fill="#215f21" stroke="#215f21" stroke-width="0.6"/><path d="M226.5,53.3L232.6,63.2L219.1,64.3Z" fill="#1e571e" stroke="#1e571e" stroke-width="0.6"/><path d="M219.8,74.5L205.7,68.4L219.1,64.3Z" fill="#1e571e" stroke="#1e571e" stroke-width="0.6"/><path d="M205.7,68.4L219.8,74.5L210.2,77.6Z" fill="#1e561e" stroke="#1e561e" stroke-width="0.6"/><path d="M232.6,63.2L219.8,74.5L219.1,64.3Z" fill="#1f581f" stroke="#1f581f" stroke-width="0.6"/><path d="M214.0,83.8L227.2,77.3L218.2,87.5Z" fill="#1f591f" stroke="#1f591f" stroke-width="0.6"/><path d="M214.0,83.8L218.2,87.5L213.8,89.7Z" fill="#1f591f" stroke="#1f591f" stroke-width="0.6"/><path d="M219.8,74.5L214.0,83.8L210.2,77.6Z" fill="#1f571f" stroke="#1f571f" stroke-width="0.6"/><path d="M214.0,83.8L219.8,74.5L227.2,77.3Z" fill="#1f581f" stroke="#1f581f" stroke-width="0.6"/><path d="M200.3,54.2L189.6,54.9L203.5,47.6Z" fill="#1f581f" stroke="#1f581f" stroke-width="0.6"/><path d="M189.6,54.9L200.3,54.2L202.2,57.1Z" fill="#1e571e" stroke="#1e571e" stroke-width="0.6"/><path d="M207.6,53.2L200.3,54.2L203.5,47.6Z" fill="#1e571e" stroke="#1e571e" stroke-width="0.6"/><path d="M200.3,54.2L207.6,53.2L202.2,57.1Z" fill="#1e571e" stroke="#1e571e" stroke-width="0.6"/><path d="M412.0,67.8L382.4,74.3L379.4,58.2Z" fill="#297429" stroke="#297429" stroke-width="0.6"/><path d="M406.9,50.4L412.0,67.8L379.4,58.2Z" fill="#297229" stroke="#297229" stroke-width="0.6"/><path d="M412.0,67.8L406.9,50.4L425.2,54.9Z" fill="#297229" stroke="#297229" stroke-width="0.6"/><path d="M443.8,72.1L412.0,67.8L425.2,54.9Z" fill="#297429" stroke="#297429" stroke-width="0.6"/><path d="M423.8,79.7L412.0,67.8L443.8,72.1Z" fill="#2a762a" stroke="#2a762a" stroke-width="0.6"/><path d="M354.1,49.9L377.5,48.3L379.4,58.2Z" fill="#287028" stroke="#287028" stroke-width="0.6"/><path d="M377.5,48.3L389.0,44.7L379.4,58.2Z" fill="#287028" stroke="#287028" stroke-width="0.6"/><path d="M377.5,48.3L381.6,42.6L389.0,44.7Z" fill="#276f27" stroke="#276f27" stroke-width="0.6"/><path d="M377.5,48.3L354.1,49.9L357.6,37.0Z" fill="#276e27" stroke="#276e27" stroke-width="0.6"/><path d="M381.6,42.6L377.5,48.3L357.6,37.0Z" fill="#276e27" stroke="#276e27" stroke-width="0.6"/><path d="M373.0,93.0L400.8,85.4L398.9,95.4Z" fill="#2b782b" stroke="#2b782b" stroke-width="0.6"/><path d="M382.4,74.3L400.8,85.4L373.0,93.0Z" fill="#2a772a" stroke="#2a772a" stroke-width="0.6"/><path d="M412.0,67.8L400.8,85.4L382.4,74.3Z" fill="#2a762a" stroke="#2a762a" stroke-width="0.6"/><path d="M400.8,85.4L412.0,67.8L423.8,79.7Z" fill="#2a762a" stroke="#2a762a" stroke-width="0.6"/><path d="M434.5,97.0L475.9,84.5L477.5,107.9Z" fill="#2c7b2c" stroke="#2c7b2c" stroke-width="0.6"/><path d="M475.9,84.5L434.5,97.0L443.8,72.1Z" fill="#2b782b" stroke="#2b782b" stroke-width="0.6"/><path d="M434.5,97.0L423.8,79.7L443.8,72.1Z" fill="#2b782b" stroke="#2b782b" stroke-width="0.6"/><path d="M466.6,116.1L434.5,97.0L477.5,107.9Z" fill="#2c7c2c" stroke="#2c7c2c" stroke-width="0.6"/><path d="M434.5,97.0L466.6,116.1L427.3,109.0Z" fill="#2c7c2c" stroke="#2c7c2c" stroke-width="0.6"/><path d="M503.8,150.9L506.3,168.2L481.2,162.4Z" fill="#2f832f" stroke="#2f832f" stroke-width="0.6"/><path d="M485.1,143.2L503.8,150.9L481.2,162.4Z" fill="#2f822f" stroke="#2f822f" stroke-width="0.6"/><path d="M503.8,150.9L562.7,153.8L506.3,168.2Z" fill="#2e802e" stroke="#2e802e" stroke-width="0.6"/><path d="M189.6,54.9L189.6,64.3L181.9,58.7Z" fill="#1f581f" stroke="#1f581f" stroke-width="0.6"/><path d="M189.6,64.3L175.8,64.9L181.9,58.7Z" fill="#1f591f" stroke="#1f591f" stroke-width="0.6"/><path d="M161.7,86.2L181.3,84.4L184.2,88.4Z" fill="#1f581f" stroke="#1f581f" stroke-width="0.6"/><path d="M181.3,84.4L163.5,75.4L177.6,75.0Z" fill="#1f591f" stroke="#1f591f" stroke-width="0.6"/><path d="M181.3,84.4L161.7,86.2L163.5,75.4Z" fill="#1f5a1f" stroke="#1f5a1f" stroke-width="0.6"/><path d="M201.2,73.8L205.7,68.4L210.2,77.6Z" fill="#1e561e" stroke="#1e561e" stroke-width="0.6"/><path d="M184.9,91.2L196.1,98.5L179.9,100.2Z" fill="#1f581f" stroke="#1f581f" stroke-width="0.6"/><path d="M162.3,94.5L184.9,91.2L179.9,100.2Z" fill="#1f581f" stroke="#1f581f" stroke-width="0.6"/><path d="M184.9,91.2L162.3,94.5L184.2,88.4Z" fill="#1f581f" stroke="#1f581f" stroke-width="0.6"/><path d="M199.1,105.8L196.1,98.5L207.0,105.0Z" fill="#205c20" stroke="#205c20" stroke-width="0.6"/><path d="M199.1,105.8L207.0,105.0L201.4,117.8Z" fill="#215f21" stroke="#215f21" stroke-width="0.6"/><path d="M191.3,120.4L199.1,105.8L201.4,117.8Z" fill="#226022" stroke="#226022" stroke-width="0.6"/><path d="M199.1,105.8L191.3,120.4L180.6,106.6Z" fill="#215d21" stroke="#215d21" stroke-width="0.6"/><path d="M390.9,136.1L357.6,116.9L397.2,131.9Z" fill="#2e802e" stroke="#2e802e" stroke-width="0.6"/><path d="M390.9,136.1L383.7,138.6L357.6,116.9Z" fill="#2e802e" stroke="#2e802e" stroke-width="0.6"/><path d="M348.7,160.8L395.3,145.7L400.5,157.3Z" fill="#308530" stroke="#308530" stroke-width="0.6"/><path d="M383.7,138.6L395.3,145.7L348.7,160.8Z" fill="#2f842f" stroke="#2f842f" stroke-width="0.6"/><path d="M390.9,136.1L395.3,145.7L383.7,138.6Z" fill="#2f822f" stroke="#2f822f" stroke-width="0.6"/><path d="M395.3,145.7L421.7,155.4L400.5,157.3Z" fill="#308530" stroke="#308530" stroke-width="0.6"/><path d="M421.7,155.4L395.3,145.7L397.2,131.9Z" fill="#2f832f" stroke="#2f832f" stroke-width="0.6"/><path d="M395.3,145.7L390.9,136.1L397.2,131.9Z" fill="#2f822f" stroke="#2f822f" stroke-width="0.6"/><path d="M329.9,246.9L280.1,257.9L276.7,220.3Z" fill="#389a38" stroke="#389a38" stroke-width="0.6"/><path d="M280.1,257.9L329.9,246.9L282.3,273.1Z" fill="#399d39" stroke="#399d39" stroke-width="0.6"/><path d="M276.7,220.3L280.1,257.9L234.0,239.9Z" fill="#379837" stroke="#379837" stroke-width="0.6"/><path d="M280.1,257.9L235.6,251.8L234.0,239.9Z" fill="#389a38" stroke="#389a38" stroke-width="0.6"/><path d="M235.6,251.8L280.1,257.9L225.0,261.4Z" fill="#389b38" stroke="#389b38" stroke-width="0.6"/><path d="M280.1,257.9L282.3,273.1L225.0,261.4Z" fill="#399d39" stroke="#399d39" stroke-width="0.6"/><path d="M282.3,273.1L343.0,255.5L348.3,262.0Z" fill="#399e39" stroke="#399e39" stroke-width="0.6"/><path d="M329.9,246.9L343.0,255.5L282.3,273.1Z" fill="#399d39" stroke="#399d39" stroke-width="0.6"/><path d="M343.0,255.5L329.9,246.9L357.8,226.9Z" fill="#379937" stroke="#379937" stroke-width="0.6"/><path d="M405.6,236.9L343.0,255.5L357.8,226.9Z" fill="#379837" stroke="#379837" stroke-width="0.6"/><path d="M343.0,255.5L409.9,250.8L348.3,262.0Z" fill="#389b38" stroke="#389b38" stroke-width="0.6"/><path d="M343.0,255.5L405.6,236.9L409.9,250.8Z" fill="#379837" stroke="#379837" stroke-width="0.6"/><path d="M162.3,94.5L155.6,102.9L139.4,96.1Z" fill="#215d21" stroke="#215d21" stroke-width="0.6"/><path d="M155.6,102.9L162.3,94.5L167.3,106.4Z" fill="#205b20" stroke="#205b20" stroke-width="0.6"/><path d="M155.6,102.9L140.4,129.5L139.4,96.1Z" fill="#215f21" stroke="#215f21" stroke-width="0.6"/><path d="M155.6,102.9L164.6,123.0L140.4,129.5Z" fill="#215e21" stroke="#215e21" stroke-width="0.6"/><path d="M164.6,123.0L155.6,102.9L167.3,106.4Z" fill="#205b20" stroke="#205b20" stroke-width="0.6"/><path d="M251.8,43.5L257.3,48.6L252.4,50.8Z" fill="#205b20" stroke="#205b20" stroke-width="0.6"/><path d="M257.8,45.4L257.3,48.6L251.8,43.5Z" fill="#205b20" stroke="#205b20" stroke-width="0.6"/><path d="M257.3,48.6L268.5,50.8L252.4,50.8Z" fill="#205c20" stroke="#205c20" stroke-width="0.6"/><path d="M257.3,48.6L257.8,45.4L266.3,45.4Z" fill="#205c20" stroke="#205c20" stroke-width="0.6"/><path d="M242.9,43.3L230.7,45.3L233.6,40.1Z" fill="#1f581f" stroke="#1f581f" stroke-width="0.6"/><path d="M238.0,70.3L232.6,63.2L249.6,63.9Z" fill="#1f5a1f" stroke="#1f5a1f" stroke-width="0.6"/><path d="M238.0,70.3L249.6,63.9L258.2,71.3Z" fill="#205c20" stroke="#205c20" stroke-width="0.6"/><path d="M227.2,77.3L238.0,70.3L258.2,71.3Z" fill="#205c20" stroke="#205c20" stroke-width="0.6"/><path d="M219.8,74.5L238.0,70.3L227.2,77.3Z" fill="#1f591f" stroke="#1f591f" stroke-width="0.6"/><path d="M238.0,70.3L219.8,74.5L232.6,63.2Z" fill="#1f591f" stroke="#1f591f" stroke-width="0.6"/><path d="M214.6,44.0L211.2,48.8L203.5,47.6Z" fill="#1e571e" stroke="#1e571e" stroke-width="0.6"/><path d="M211.2,48.8L207.6,53.2L203.5,47.6Z" fill="#1e571e" stroke="#1e571e" stroke-width="0.6"/><path d="M214.6,58.3L226.5,53.3L219.1,64.3Z" fill="#1e571e" stroke="#1e571e" stroke-width="0.6"/><path d="M207.6,53.2L214.6,58.3L202.2,57.1Z" fill="#1e561e" stroke="#1e561e" stroke-width="0.6"/><path d="M214.6,58.3L211.2,48.8L226.5,53.3Z" fill="#1e571e" stroke="#1e571e" stroke-width="0.6"/><path d="M211.2,48.8L214.6,58.3L207.6,53.2Z" fill="#1e571e" stroke="#1e571e" stroke-width="0.6"/><path d="M205.7,68.4L214.6,58.3L219.1,64.3Z" fill="#1e561e" stroke="#1e561e" stroke-width="0.6"/><path d="M214.6,58.3L205.7,68.4L202.2,57.1Z" fill="#1e561e" stroke="#1e561e" stroke-width="0.6"/><path d="M214.0,83.8L208.2,79.7L210.2,77.6Z" fill="#1e571e" stroke="#1e571e" stroke-width="0.6"/><path d="M419.3,92.2L400.8,85.4L423.8,79.7Z" fill="#2b782b" stroke="#2b782b" stroke-width="0.6"/><path d="M434.5,97.0L419.3,92.2L423.8,79.7Z" fill="#2b792b" stroke="#2b792b" stroke-width="0.6"/><path d="M400.8,85.4L419.3,92.2L398.9,95.4Z" fill="#2b792b" stroke="#2b792b" stroke-width="0.6"/><path d="M419.3,92.2L427.3,109.0L398.9,95.4Z" fill="#2c7a2c" stroke="#2c7a2c" stroke-width="0.6"/><path d="M419.3,92.2L434.5,97.0L427.3,109.0Z" fill="#2c7b2c" stroke="#2c7b2c" stroke-width="0.6"/><path d="M562.7,153.8L515.7,135.2L563.4,137.3Z" fill="#2c7c2c" stroke="#2c7c2c" stroke-width="0.6"/><path d="M503.8,150.9L515.7,135.2L562.7,153.8Z" fill="#2d7e2d" stroke="#2d7e2d" stroke-width="0.6"/><path d="M515.7,135.2L502.0,114.9L563.4,137.3Z" fill="#2c7c2c" stroke="#2c7c2c" stroke-width="0.6"/><path d="M205.7,68.4L196.3,62.3L202.2,57.1Z" fill="#1e561e" stroke="#1e561e" stroke-width="0.6"/><path d="M196.3,62.3L189.6,54.9L202.2,57.1Z" fill="#1e571e" stroke="#1e571e" stroke-width="0.6"/><path d="M196.3,62.3L189.6,64.3L189.6,54.9Z" fill="#1e571e" stroke="#1e571e" stroke-width="0.6"/><path d="M183.5,78.4L181.3,84.4L177.6,75.0Z" fill="#1e571e" stroke="#1e571e" stroke-width="0.6"/><path d="M186.7,81.0L191.5,80.6L184.2,88.4Z" fill="#1e561e" stroke="#1e561e" stroke-width="0.6"/><path d="M181.3,84.4L186.7,81.0L184.2,88.4Z" fill="#1e571e" stroke="#1e571e" stroke-width="0.6"/><path d="M186.7,81.0L183.5,78.4L191.5,80.6Z" fill="#1e561e" stroke="#1e561e" stroke-width="0.6"/><path d="M183.5,78.4L186.7,81.0L181.3,84.4Z" fill="#1e571e" stroke="#1e571e" stroke-width="0.6"/><path d="M201.2,73.8L191.2,68.1L205.7,68.4Z" fill="#1e561e" stroke="#1e561e" stroke-width="0.6"/><path d="M191.2,68.1L196.3,62.3L205.7,68.4Z" fill="#1e561e" stroke="#1e561e" stroke-width="0.6"/><path d="M196.3,62.3L191.2,68.1L189.6,64.3Z" fill="#1e571e" stroke="#1e571e" stroke-width="0.6"/><path d="M191.2,68.1L183.5,78.4L177.6,75.0Z" fill="#1e571e" stroke="#1e571e" stroke-width="0.6"/><path d="M191.2,68.1L201.2,73.8L191.5,80.6Z" fill="#1e561e" stroke="#1e561e" stroke-width="0.6"/><path d="M183.5,78.4L191.2,68.1L191.5,80.6Z" fill="#1e561e" stroke="#1e561e" stroke-width="0.6"/><path d="M175.8,64.9L191.2,68.1L177.6,75.0Z" fill="#1f581f" stroke="#1f581f" stroke-width="0.6"/><path d="M189.6,64.3L191.2,68.1L175.8,64.9Z" fill="#1f581f" stroke="#1f581f" stroke-width="0.6"/><path d="M184.9,91.2L202.0,94.5L196.1,98.5Z" fill="#1f581f" stroke="#1f581f" stroke-width="0.6"/><path d="M207.0,105.0L202.0,94.5L213.8,89.7Z" fill="#205b20" stroke="#205b20" stroke-width="0.6"/><path d="M196.1,98.5L202.0,94.5L207.0,105.0Z" fill="#205a20" stroke="#205a20" stroke-width="0.6"/><path d="M191.5,80.6L202.0,94.5L184.2,88.4Z" fill="#1e561e" stroke="#1e561e" stroke-width="0.6"/><path d="M202.0,94.5L184.9,91.2L184.2,88.4Z" fill="#1e571e" stroke="#1e571e" stroke-width="0.6"/><path d="M185.1,102.7L199.1,105.8L180.6,106.6Z" fill="#205a20" stroke="#205a20" stroke-width="0.6"/><path d="M199.1,105.8L185.1,102.7L196.1,98.5Z" fill="#1f5a1f" stroke="#1f5a1f" stroke-width="0.6"/><path d="M185.1,102.7L180.6,106.6L179.9,100.2Z" fill="#1f591f" stroke="#1f591f" stroke-width="0.6"/><path d="M196.1,98.5L185.1,102.7L179.9,100.2Z" fill="#1f591f" stroke="#1f591f" stroke-width="0.6"/><path d="M269.1,48.6L257.3,48.6L266.3,45.4Z" fill="#205d20" stroke="#205d20" stroke-width="0.6"/><path d="M257.3,48.6L269.1,48.6L268.5,50.8Z" fill="#215d21" stroke="#215d21" stroke-width="0.6"/><path d="M272.3,46.7L269.1,48.6L266.3,45.4Z" fill="#215e21" stroke="#215e21" stroke-width="0.6"/><path d="M268.5,50.8L269.1,48.6L272.3,46.7Z" fill="#215e21" stroke="#215e21" stroke-width="0.6"/><path d="M224.7,47.6L230.7,45.3L226.5,53.3Z" fill="#1e571e" stroke="#1e571e" stroke-width="0.6"/><path d="M211.2,48.8L224.7,47.6L226.5,53.3Z" fill="#1e571e" stroke="#1e571e" stroke-width="0.6"/><path d="M224.7,47.6L211.2,48.8L214.6,44.0Z" fill="#1e571e" stroke="#1e571e" stroke-width="0.6"/><path d="M238.7,52.3L242.9,43.3L252.4,50.8Z" fill="#1f591f" stroke="#1f591f" stroke-width="0.6"/><path d="M238.7,52.3L230.7,45.3L242.9,43.3Z" fill="#1f581f" stroke="#1f581f" stroke-width="0.6"/><path d="M230.7,45.3L238.7,52.3L226.5,53.3Z" fill="#1f581f" stroke="#1f581f" stroke-width="0.6"/><path d="M238.7,52.3L232.6,63.2L226.5,53.3Z" fill="#1f581f" stroke="#1f581f" stroke-width="0.6"/><path d="M249.6,63.9L238.7,52.3L252.4,50.8Z" fill="#1f5a1f" stroke="#1f5a1f" stroke-width="0.6"/><path d="M232.6,63.2L238.7,52.3L249.6,63.9Z" fill="#1f591f" stroke="#1f591f" stroke-width="0.6"/><path d="M197.7,79.9L202.0,94.5L191.5,80.6Z" fill="#1e561e" stroke="#1e561e" stroke-width="0.6"/><path d="M202.0,94.5L197.7,79.9L213.8,89.7Z" fill="#1f581f" stroke="#1f581f" stroke-width="0.6"/><path d="M197.7,79.9L214.0,83.8L213.8,89.7Z" fill="#1f571f" stroke="#1f571f" stroke-width="0.6"/><path d="M197.7,79.9L208.2,79.7L214.0,83.8Z" fill="#1e571e" stroke="#1e571e" stroke-width="0.6"/><path d="M502.0,114.9L506.0,132.6L486.0,122.5Z" fill="#2d7d2d" stroke="#2d7d2d" stroke-width="0.6"/><path d="M515.7,135.2L506.0,132.6L502.0,114.9Z" fill="#2d7d2d" stroke="#2d7d2d" stroke-width="0.6"/><path d="M506.0,132.6L485.1,143.2L486.0,122.5Z" fill="#2d7f2d" stroke="#2d7f2d" stroke-width="0.6"/><path d="M506.0,132.6L503.8,150.9L485.1,143.2Z" fill="#2e802e" stroke="#2e802e" stroke-width="0.6"/><path d="M506.0,132.6L515.7,135.2L503.8,150.9Z" fill="#2d7f2d" stroke="#2d7f2d" stroke-width="0.6"/><path d="M224.7,43.3L224.7,47.6L214.6,44.0Z" fill="#1e571e" stroke="#1e571e" stroke-width="0.6"/><path d="M224.7,47.6L224.7,43.3L230.7,45.3Z" fill="#1e571e" stroke="#1e571e" stroke-width="0.6"/><path d="M230.7,45.3L224.7,43.3L233.6,40.1Z" fill="#1e571e" stroke="#1e571e" stroke-width="0.6"/><path d="M197.7,79.9L200.9,77.3L208.2,79.7Z" fill="#1e561e" stroke="#1e561e" stroke-width="0.6"/><path d="M200.9,77.3L201.2,73.8L210.2,77.6Z" fill="#1e561e" stroke="#1e561e" stroke-width="0.6"/><path d="M208.2,79.7L200.9,77.3L210.2,77.6Z" fill="#1e561e" stroke="#1e561e" stroke-width="0.6"/><path d="M201.2,73.8L200.9,77.3L191.5,80.6Z" fill="#1e561e" stroke="#1e561e" stroke-width="0.6"/><path d="M200.9,77.3L197.7,79.9L191.5,80.6Z" fill="#1e561e" stroke="#1e561e" stroke-width="0.6"/>
</g>
<path d="M251.8,43.5L257.3,48.6M139.4,96.1L162.3,94.5M196.1,98.5L184.9,91.2M201.2,73.8L200.9,77.3M226.5,53.3L232.6,63.2M210.2,77.6L214.0,83.8M167.3,106.4L180.6,106.6M203.5,47.6L214.6,44.0M203.5,47.6L207.6,53.2M214.6,44.0L224.7,43.3M227.2,77.3L218.2,87.5M203.5,47.6L211.2,48.8M251.8,43.5L257.8,45.4M238.0,70.3L258.2,71.3M189.6,64.3L191.2,68.1M226.5,53.3L219.1,64.3M205.7,68.4L201.2,73.8M197.7,79.9L213.8,89.7M203.5,47.6L200.3,54.2M167.3,106.4L179.9,100.2M175.8,124.2L180.6,106.6M230.7,45.3L242.9,43.3M163.5,75.4L177.6,75.0M226.5,53.3L214.6,58.3M185.1,102.7L180.6,106.6M181.3,84.4L184.2,88.4M205.7,68.4L219.8,74.5M189.6,64.3L196.3,62.3M272.3,46.7L269.1,48.6M230.7,45.3L238.7,52.3M163.5,75.4L175.8,64.9M269.1,48.6L268.5,50.8M164.6,123.0L140.4,129.5M189.6,54.9L202.2,57.1M207.6,53.2L202.2,57.1M249.6,63.9L238.0,70.3M191.3,120.4L199.1,105.8M249.6,63.9L268.5,50.8M214.6,58.3L219.1,64.3M200.9,77.3L210.2,77.6M205.7,68.4L210.2,77.6M208.2,79.7L210.2,77.6M249.6,63.9L252.4,50.8M207.0,105.0L199.1,105.8M155.6,102.9L164.6,123.0M191.5,80.6L200.9,77.3M161.7,86.2L181.3,84.4M164.6,123.0L175.8,124.2M257.3,48.6L266.3,45.4M253.1,36.1L251.8,43.5M202.0,94.5L184.2,88.4M200.9,77.3L208.2,79.7M268.5,37.4L257.8,45.4M218.2,87.5L207.0,105.0M181.9,58.7L189.6,64.3M162.3,94.5L184.2,88.4M224.7,43.3L233.6,40.1M189.6,54.9L196.3,62.3M191.5,80.6L202.0,94.5M162.3,94.5L167.3,106.4M253.1,36.1L268.5,37.4M257.3,48.6L268.5,50.8M268.5,37.4L282.6,38.3M268.5,50.8L258.2,71.3M214.0,83.8L218.2,87.5M270.6,42.2L284.5,42.2M191.5,80.6L201.2,73.8M200.3,54.2L207.6,53.2M191.2,68.1L183.5,78.4M150.4,86.2L162.3,94.5M242.9,43.3L251.8,43.5M257.8,45.4L257.3,48.6M224.7,43.3L230.7,45.3M238.7,52.3L232.6,63.2M162.3,94.5L179.9,100.2M257.3,48.6L252.4,50.8M202.0,94.5L184.9,91.2M196.3,62.3L191.2,68.1M177.6,75.0L191.2,68.1M268.5,50.8L284.5,45.4M191.2,68.1L205.7,68.4M183.5,78.4L191.5,80.6M179.9,100.2L196.1,98.5M183.5,78.4L181.3,84.4M199.1,105.8L196.1,98.5M214.6,44.0L224.7,47.6M162.3,94.5L155.6,102.9M202.2,57.1L196.3,62.3M196.1,98.5L202.0,94.5M181.9,58.7L203.5,47.6M150.4,86.2L161.7,86.2M219.8,74.5L214.0,83.8M161.7,86.2L162.3,94.5M183.5,78.4L186.7,81.0M242.9,43.3L253.1,36.1M179.9,100.2L180.6,106.6M242.9,43.3L252.4,50.8M214.6,44.0L211.2,48.8M266.3,45.4L269.1,48.6M211.2,48.8L226.5,53.3M186.7,81.0L184.2,88.4M219.1,64.3L219.8,74.5M210.2,77.6L219.8,74.5M163.5,75.4L181.3,84.4M242.9,43.3L238.7,52.3M175.8,64.9L191.2,68.1M167.3,106.4L175.8,124.2M238.0,70.3L227.2,77.3M197.7,79.9L208.2,79.7M201.2,73.8L210.2,77.6M175.8,64.9L177.6,75.0M201.4,117.8L199.1,105.8M266.3,45.4L272.3,46.7M230.7,45.3L226.5,53.3M197.7,79.9L214.0,83.8M175.8,64.9L181.9,58.7M207.0,105.0L202.0,94.5M214.6,58.3L205.7,68.4M167.3,106.4L164.6,123.0M238.0,70.3L219.8,74.5M251.8,43.5L252.4,50.8M272.3,46.7L284.5,45.4M197.7,79.9L200.9,77.3M226.5,53.3L238.7,52.3M207.0,105.0L201.4,117.8M233.6,40.1L239.4,38.2M268.5,37.4L270.6,42.2M214.0,83.8L213.8,89.7M208.2,79.7L214.0,83.8M282.6,38.3L270.6,42.2M197.7,79.9L202.0,94.5M207.0,105.0L196.1,98.5M233.6,40.1L242.9,43.3M249.6,63.9L258.2,71.3M272.3,46.7L284.5,42.2M184.9,91.2L184.2,88.4M218.2,87.5L213.8,89.7M191.2,68.1L201.2,73.8M162.3,94.5L184.9,91.2M205.7,68.4L219.1,64.3M189.6,54.9L189.6,64.3M191.3,120.4L180.6,106.6M207.0,105.0L213.8,89.7M257.3,48.6L269.1,48.6M155.6,102.9L167.3,106.4M252.4,50.8L268.5,50.8M268.5,37.4L266.3,45.4M191.5,80.6L197.7,79.9M185.1,102.7L196.1,98.5M224.7,43.3L224.7,47.6M155.6,102.9L140.4,129.5M233.6,40.1L230.7,45.3M177.6,75.0L181.3,84.4M272.3,46.7L268.5,50.8M200.3,54.2L202.2,57.1M163.5,75.4L161.7,86.2M164.6,123.0L161.7,131.1M207.6,53.2L214.6,58.3M199.1,105.8L180.6,106.6M186.7,81.0L191.5,80.6M186.7,81.0L181.3,84.4M227.2,77.3L258.2,71.3M258.2,71.3L218.2,87.5M181.9,58.7L189.6,54.9M189.6,54.9L203.5,47.6M219.8,74.5L227.2,77.3M189.6,54.9L200.3,54.2M191.5,80.6L184.2,88.4M227.2,77.3L214.0,83.8M211.2,48.8L224.7,47.6M224.7,47.6L230.7,45.3M191.2,68.1L191.5,80.6M179.9,100.2L185.1,102.7M257.8,45.4L266.3,45.4M199.1,105.8L185.1,102.7M253.1,36.1L257.8,45.4M202.2,57.1L214.6,58.3M202.0,94.5L213.8,89.7M211.2,48.8L207.6,53.2M270.6,42.2L272.3,46.7M224.7,47.6L226.5,53.3M150.4,86.2L163.5,75.4M232.6,63.2L238.0,70.3M232.6,63.2L219.8,74.5M179.9,100.2L184.9,91.2M238.7,52.3L252.4,50.8M139.4,96.1L155.6,102.9M202.2,57.1L205.7,68.4M211.2,48.8L214.6,58.3M177.6,75.0L183.5,78.4M239.4,38.2L242.9,43.3M266.3,45.4L270.6,42.2M238.7,52.3L249.6,63.9M139.4,96.1L150.4,86.2M239.4,38.2L253.1,36.1M161.7,86.2L184.2,88.4M196.3,62.3L205.7,68.4M219.1,64.3L232.6,63.2M232.6,63.2L249.6,63.9M175.8,64.9L189.6,64.3" stroke="#279827" stroke-width="1" fill="none" shape-rendering="crispEdges"/>
<path d="M137.6,259.3L197.4,246.6M236.0,189.2L171.8,214.9M236.0,189.2L240.1,211.3M392.0,174.4L381.2,188.0M562.7,153.8L554.1,192.3M137.6,259.3L140.6,267.9M554.1,192.3L532.3,196.1M339.3,140.0L348.7,160.8M481.2,162.4L506.3,168.2M397.2,131.9L455.8,149.2M137.6,259.3L164.9,269.2M503.8,150.9L481.2,162.4M454.9,182.6L426.2,211.1M348.7,160.8L381.2,188.0M421.7,155.4L455.8,149.2M516.9,191.9L475.5,184.6M400.5,157.3L426.2,180.3M411.1,204.0L426.2,180.3M390.9,136.1L395.3,145.7M532.3,196.1L516.9,191.9M516.9,191.9L515.0,186.5M171.8,214.9L137.6,259.3M506.3,168.2L475.5,184.6M140.6,267.9L145.1,285.8M171.8,214.9L222.8,221.4M395.3,145.7L348.7,160.8M481.2,162.4L455.8,149.2M318.4,184.5L236.0,189.2M400.5,157.3L348.7,160.8M339.3,140.0L318.4,184.5M426.2,180.3L426.2,211.1M397.2,131.9L421.7,155.4M140.6,267.9L164.9,269.2M475.5,184.6L454.9,182.6M421.7,155.4L454.9,182.6M318.4,184.5L348.7,160.8M554.1,192.3L506.3,168.2M236.0,189.2L222.8,221.4M515.0,186.5L475.5,184.6M392.0,174.4L426.2,180.3M239.8,137.7L318.4,184.5M554.1,192.3L515.0,186.5M348.7,160.8L392.0,174.4M395.3,145.7L421.7,155.4M515.0,186.5L506.3,168.2M236.0,189.2L156.1,194.0M142.2,214.3L137.6,259.3M106.7,254.8L137.6,259.3M383.7,138.6L395.3,145.7M481.2,162.4L454.9,182.6M503.8,150.9L506.3,168.2M485.1,143.2L455.8,149.2M52.1,250.6L106.7,254.8M383.7,138.6L348.7,160.8M318.4,184.5L381.2,188.0M145.1,285.8L164.9,269.2M400.5,157.3L392.0,174.4M171.8,214.9L199.7,238.3M485.1,143.2L481.2,162.4M426.2,180.3L454.9,182.6M381.2,188.0L426.2,180.3M421.7,155.4L426.2,180.3M455.8,149.2L454.9,182.6M171.8,214.9L197.4,246.6M532.3,196.1L515.0,186.5M400.5,157.3L421.7,155.4M395.3,145.7L400.5,157.3M481.2,162.4L475.5,184.6" stroke="#34ca34" stroke-width="1" fill="none" shape-rendering="crispEdges"/>
<path d="M300.2,42.2L315.7,37.9M300.2,42.2L335.4,58.9M282.6,38.3L284.5,42.2M175.8,124.2L191.3,120.4M323.7,33.2L325.3,39.0M140.4,129.5L126.9,156.5M175.8,124.2L161.7,131.1M323.7,33.2L315.7,37.9M315.7,37.9L325.3,39.0M305.7,36.1L300.2,42.2M207.0,105.0L239.8,137.7M175.8,124.2L195.6,134.8M315.7,37.9L335.4,58.9M305.7,36.1L292.9,40.3M284.5,42.2L292.9,40.3M161.7,131.1L151.6,170.9M284.5,45.4L300.2,42.2M195.6,134.8L161.7,131.1M139.4,96.1L98.1,179.4M291.6,38.3L284.5,42.2M284.5,42.2L284.5,45.4M161.7,131.1L126.9,156.5M300.2,42.2L291.6,54.6M291.6,54.6L335.4,58.9M258.2,71.3L291.6,54.6M140.4,129.5L161.7,131.1M323.7,33.2L342.6,34.2M282.6,38.3L291.6,38.3M191.3,120.4L201.4,117.8M284.5,45.4L291.6,54.6M325.3,39.0L335.4,58.9M197.0,145.8L161.7,131.1M284.5,45.4L292.9,40.3M325.3,39.0L342.6,34.2M342.6,34.2L357.6,37.0M305.7,36.1L315.7,37.9M291.6,38.3L305.7,36.1M305.7,36.1L323.7,33.2M139.4,96.1L140.4,129.5M195.6,134.8L201.4,117.8M291.6,38.3L292.9,40.3M268.5,50.8L291.6,54.6M195.6,134.8L191.3,120.4M292.9,40.3L300.2,42.2" stroke="#2aa52a" stroke-width="1" fill="none" shape-rendering="crispEdges"/>
<path d="M546.7,86.1L593.5,93.3M357.6,37.0L381.6,42.6M381.6,42.6L389.0,44.7M239.8,137.7L201.4,117.8M352.8,69.8L369.8,76.8M357.2,96.1L328.3,88.0M352.8,69.8L365.2,83.3M369.8,76.8L382.4,74.3M357.6,37.0L377.5,48.3M335.4,58.9L352.8,69.8M325.3,39.0L354.1,49.9M425.2,54.9L443.8,72.1M382.4,74.3L365.2,83.3M412.0,67.8L443.8,72.1M354.1,49.9L377.5,48.3M443.8,72.1L423.8,79.7M98.1,179.4L78.6,217.6M342.6,34.2L354.1,49.9M425.2,54.9L412.0,67.8M98.1,179.4L151.6,170.9M354.1,49.9L335.4,58.9M379.4,58.2L406.9,50.4M98.1,179.4L126.9,156.5M382.4,74.3L406.9,50.4M406.9,50.4L425.2,54.9M379.4,58.2L382.4,74.3M382.4,74.3L412.0,67.8M195.6,134.8L197.0,145.8M449.8,62.5L443.8,72.1M503.7,76.9L526.3,80.4M351.4,103.4L328.3,88.0M182.0,169.5L151.6,170.9M369.8,76.8L365.2,83.3M381.6,42.6L377.5,48.3M239.8,137.7L197.0,145.8M357.6,37.0L354.1,49.9M449.8,62.5L483.2,71.6M151.6,170.9L113.4,219.4M239.8,137.7L195.6,134.8M546.7,86.1L587.8,112.6M365.2,83.3L328.3,88.0M98.1,179.4L133.6,212.0M382.4,74.3L373.0,93.0M425.2,54.9L449.8,62.5M151.6,170.9L156.1,194.0M412.0,67.8L400.8,85.4M365.2,83.3L362.5,88.5M354.1,49.9L352.8,69.8M291.6,54.6L328.3,88.0M126.9,156.5L151.6,170.9M526.3,80.4L546.7,86.1M98.1,179.4L113.4,219.4M389.0,44.7L379.4,58.2M412.0,67.8L423.8,79.7M354.1,49.9L379.4,58.2M379.4,58.2L369.8,76.8M98.1,179.4L140.4,129.5M406.9,50.4L412.0,67.8M389.0,44.7L406.9,50.4M483.2,71.6L443.8,72.1M483.2,71.6L503.7,76.9M382.4,74.3L400.8,85.4M389.0,44.7L377.5,48.3M377.5,48.3L379.4,58.2M379.4,58.2L352.8,69.8M335.4,58.9L328.3,88.0M362.5,88.5L328.3,88.0M182.0,169.5L161.7,131.1M352.8,69.8L328.3,88.0M182.0,169.5L197.0,145.8" stroke="#2db12d" stroke-width="1" fill="none" shape-rendering="crispEdges"/>
<path d="M475.5,184.6L453.8,225.3M197.4,246.6L195.8,257.9M405.6,236.9L409.9,250.8M315.6,206.4L357.8,226.9M426.2,211.1L453.8,225.3M219.9,230.9L234.0,239.9M234.0,239.9L235.6,251.8M453.8,225.3L465.7,234.3M197.4,246.6L235.6,251.8M235.2,223.2L234.0,239.9M211.6,237.6L234.0,239.9M357.8,226.9L343.0,255.5M167.9,329.9L164.9,269.2M240.1,211.3L235.2,223.2M315.6,206.4L329.9,246.9M318.4,184.5L329.9,204.7M195.8,257.9L225.0,261.4M145.1,285.8L167.9,329.9M227.3,223.2L219.9,230.9M318.4,184.5L315.6,206.4M164.9,269.2L201.0,263.7M195.8,257.9L210.4,265.9M381.2,188.0L357.8,226.9M227.3,223.2L235.2,223.2M391.3,219.0L405.6,236.9M164.9,269.2L195.8,257.9M516.9,191.9L465.7,234.3M276.7,220.3L329.9,246.9M222.8,221.4L227.3,223.2M381.2,188.0L391.3,219.0M199.7,238.3L197.4,246.6M329.9,204.7L357.8,226.9M516.9,191.9L453.8,225.3M197.4,246.6L225.0,261.4M381.2,188.0L329.9,204.7M219.9,230.9L211.6,237.6M201.0,263.7L222.8,283.9M276.7,220.3L315.6,206.4M222.8,221.4L199.7,238.3M405.6,236.9L453.8,225.3M167.9,329.9L201.0,263.7M315.6,206.4L329.9,204.7M357.8,226.9L329.9,246.9M219.9,230.9L199.7,238.3M405.6,236.9L343.0,255.5M276.7,220.3L235.2,223.2M405.6,236.9L426.2,211.1M276.7,220.3L234.0,239.9M240.1,211.3L222.8,221.4M167.9,329.9L222.8,283.9M235.2,223.2L219.9,230.9M211.6,237.6L235.6,251.8M195.8,257.9L201.0,263.7M357.8,226.9L405.6,236.9M240.1,211.3L276.7,220.3M454.9,182.6L453.8,225.3M411.1,204.0L391.3,219.0M411.1,204.0L426.2,211.1M211.6,237.6L197.4,246.6M391.3,219.0L357.8,226.9M391.3,219.0L426.2,211.1M409.9,250.8L465.7,234.3M164.9,269.2L197.4,246.6M199.7,238.3L211.6,237.6M222.8,221.4L219.9,230.9M210.4,265.9L225.0,261.4M236.0,189.2L276.7,220.3M409.9,250.8L453.8,225.3M381.2,188.0L411.1,204.0M532.3,196.1L465.7,234.3M201.0,263.7L210.4,265.9M236.0,189.2L315.6,206.4M222.8,221.4L235.2,223.2" stroke="#37d737" stroke-width="1" fill="none" shape-rendering="crispEdges"/>
<path d="M593.5,93.3L587.8,112.6M328.3,88.0L339.3,140.0M502.0,114.9L486.0,122.5M466.6,116.1L455.8,149.2M182.0,169.5L156.1,194.0M106.7,254.8L85.1,237.5M78.6,217.6L85.1,237.5M477.5,107.9L502.0,114.9M239.8,137.7L236.0,189.2M562.7,153.8L506.3,168.2M443.8,72.1L475.9,84.5M419.3,92.2L427.3,109.0M78.6,217.6L113.4,219.4M502.0,114.9L515.7,135.2M367.7,103.0L351.4,103.4M78.6,217.6L52.1,250.6M113.4,219.4L133.6,212.0M113.4,219.4L85.1,237.5M587.8,112.6L563.4,137.3M133.6,212.0L142.2,214.3M434.5,97.0L466.6,116.1M367.7,103.0L357.2,96.1M113.4,219.4L106.7,254.8M485.1,143.2L466.6,116.1M383.7,138.6L357.6,116.9M365.2,83.3L373.0,93.0M400.8,85.4L398.9,95.4M419.3,92.2L434.5,97.0M506.0,132.6L485.1,143.2M515.7,135.2L503.8,150.9M351.4,103.4L339.3,140.0M587.8,112.6L515.7,135.2M357.6,116.9L339.3,140.0M483.2,71.6L475.9,84.5M423.8,79.7L400.8,85.4M503.7,76.9L502.0,114.9M400.8,85.4L419.3,92.2M398.9,95.4L373.0,93.0M506.0,132.6L486.0,122.5M390.9,136.1L383.7,138.6M477.5,107.9L466.6,116.1M397.2,131.9L390.9,136.1M434.5,97.0L477.5,107.9M156.1,194.0L171.8,214.9M427.3,109.0L455.8,149.2M477.5,107.9L486.0,122.5M362.5,88.5L357.2,96.1M351.4,103.4L357.6,116.9M398.9,95.4L427.3,109.0M398.9,95.4L397.2,131.9M397.2,131.9L357.6,116.9M477.5,107.9L503.7,76.9M443.8,72.1L434.5,97.0M156.1,194.0L142.2,214.3M357.2,96.1L351.4,103.4M486.0,122.5L485.1,143.2M142.2,214.3L171.8,214.9M502.0,114.9L506.0,132.6M236.0,189.2L197.0,145.8M362.5,88.5L373.0,93.0M562.7,153.8L503.8,150.9M427.3,109.0L397.2,131.9M400.8,85.4L373.0,93.0M563.4,137.3L562.7,153.8M419.3,92.2L398.9,95.4M475.9,84.5L503.7,76.9M52.1,250.6L85.1,237.5M236.0,189.2L182.0,169.5M563.4,137.3L515.7,135.2M367.7,103.0L397.2,131.9M367.7,103.0L357.6,116.9M526.3,80.4L502.0,114.9M475.9,84.5L477.5,107.9M383.7,138.6L339.3,140.0M423.8,79.7L434.5,97.0M113.4,219.4L142.2,214.3M587.8,112.6L502.0,114.9M506.0,132.6L515.7,135.2M434.5,97.0L427.3,109.0M515.7,135.2L562.7,153.8M113.4,219.4L137.6,259.3M486.0,122.5L466.6,116.1M485.1,143.2L503.8,150.9M390.9,136.1L357.6,116.9M373.0,93.0L367.7,103.0M373.0,93.0L357.2,96.1M506.0,132.6L503.8,150.9M434.5,97.0L475.9,84.5M156.1,194.0L133.6,212.0M397.2,131.9L395.3,145.7M423.8,79.7L419.3,92.2M398.9,95.4L367.7,103.0M427.3,109.0L466.6,116.1" stroke="#31be31" stroke-width="1" fill="none" shape-rendering="crispEdges"/>
<path d="M235.4,292.4L282.4,281.2M235.4,292.4L282.3,273.1M282.3,273.1L348.3,262.0M222.8,283.9L235.4,292.4M280.1,257.9L329.9,246.9M235.6,251.8L280.1,257.9M282.3,273.1L343.0,255.5M329.9,246.9L343.0,255.5M282.3,273.1L329.9,246.9M225.0,261.4L282.3,273.1M280.1,257.9L282.3,273.1M210.4,265.9L222.8,283.9M282.4,281.2L348.3,262.0M234.0,239.9L280.1,257.9M167.9,329.9L235.4,292.4M343.0,255.5L348.3,262.0M222.8,283.9L282.3,273.1M282.3,273.1L282.4,281.2M225.0,261.4L280.1,257.9M235.6,251.8L225.0,261.4M409.9,250.8L348.3,262.0M225.0,261.4L222.8,283.9M276.7,220.3L280.1,257.9M409.9,250.8L343.0,255.5" stroke="#3ae33a" stroke-width="1" fill="none" shape-rendering="crispEdges"/>
</g>
<path d="M52.1,250.6 L78.6,217.6 L98.5,179.4 L113.5,146.0 L122.7,127.7 L139.5,95.8 L150.4,86.2 L163.4,75.4 L176.0,64.9 L181.7,58.6 L189.4,54.9 L203.5,47.6 L214.6,44.0 L224.7,43.3 L233.6,40.1 L239.4,38.2 L253.1,36.1 L268.5,37.4 L282.6,38.3 L291.6,38.3 L305.7,36.1 L323.7,33.2 L342.6,34.2 L357.6,37.0 L381.6,42.6 L389.0,44.7 L406.9,50.4 L425.2,54.9 L449.8,62.5 L483.2,71.6 L503.7,76.9 L526.3,80.4 L546.7,86.1 L593.5,93.3 L587.8,112.6 L563.4,137.3 L562.7,153.8 L556.4,182.7 L554.1,192.3 L531.8,196.1 L507.0,211.0 L465.7,234.3 L409.9,250.8 L348.3,262.0 L282.4,281.2 L235.4,292.4 L167.9,329.9 L145.1,285.8 L140.6,267.9 L137.6,259.3 L106.7,254.8 Z" stroke="#34c034" stroke-width="1" fill="none" stroke-opacity="0.9" shape-rendering="crispEdges"/>
<path d="M291.7,54.5 L328.4,88.0 L339.3,140.0 L318.2,184.7 L239.9,137.8 L207.0,105.0 L218.2,87.5 L258.2,71.3 L291.7,54.5M184.9,91.2 L180.0,100.2 L180.6,106.6 L201.4,117.8M389.0,44.7 L379.8,58.5 L369.6,76.8 L362.0,88.4 L357.2,96.1 L351.4,103.4 L339.3,140.0M389.0,44.7 L382.3,74.9 L372.6,92.6 L367.6,102.8 L357.6,116.9 L339.3,140.0M425.2,54.9 L443.8,72.1 L483.2,71.6M526.3,80.4 L587.8,112.6" stroke="#f4f000" stroke-width="2" fill="none" stroke-linejoin="round"/>
<path d="M274.5,79.0L277.9,116.9" stroke="#1010d0" stroke-width="1.2"/>
<path d="M277.9,116.9L311.2,100.1" stroke="#6a1010" stroke-width="1.2"/>
<path d="M277.9,116.9L305.4,140.6" stroke="#c06a30" stroke-width="1.1"/>
<defs><radialGradient id="gdot" cx="0.4" cy="0.4" r="0.6"><stop offset="0" stop-color="#f04444"/><stop offset="0.6" stop-color="#d41e1e"/><stop offset="1" stop-color="#7a1010"/></radialGradient></defs>
<g fill="url(#gdot)"><circle cx="139.4" cy="96.1" r="1.80"/><circle cx="150.4" cy="86.2" r="1.80"/><circle cx="163.5" cy="75.4" r="1.80"/><circle cx="175.8" cy="64.9" r="1.80"/><circle cx="161.7" cy="86.2" r="1.80"/><circle cx="162.3" cy="94.5" r="1.80"/><circle cx="155.6" cy="102.9" r="1.80"/><circle cx="167.3" cy="106.4" r="1.80"/><circle cx="177.6" cy="75.0" r="1.80"/><circle cx="164.6" cy="123.0" r="1.84"/><circle cx="175.8" cy="124.2" r="1.88"/><circle cx="179.9" cy="100.2" r="1.80"/><circle cx="181.9" cy="58.7" r="1.80"/><circle cx="189.6" cy="54.9" r="1.80"/><circle cx="203.5" cy="47.6" r="1.80"/><circle cx="214.6" cy="44.0" r="1.80"/><circle cx="224.7" cy="43.3" r="1.80"/><circle cx="233.6" cy="40.1" r="1.80"/><circle cx="239.4" cy="38.2" r="1.80"/><circle cx="211.2" cy="48.8" r="1.80"/><circle cx="224.7" cy="47.6" r="1.80"/><circle cx="230.7" cy="45.3" r="1.80"/><circle cx="242.9" cy="43.3" r="1.80"/><circle cx="200.3" cy="54.2" r="1.80"/><circle cx="207.6" cy="53.2" r="1.80"/><circle cx="226.5" cy="53.3" r="1.80"/><circle cx="238.7" cy="52.3" r="1.80"/><circle cx="202.2" cy="57.1" r="1.80"/><circle cx="214.6" cy="58.3" r="1.80"/><circle cx="189.6" cy="64.3" r="1.80"/><circle cx="196.3" cy="62.3" r="1.80"/><circle cx="191.2" cy="68.1" r="1.80"/><circle cx="205.7" cy="68.4" r="1.80"/><circle cx="219.1" cy="64.3" r="1.80"/><circle cx="232.6" cy="63.2" r="1.80"/><circle cx="249.6" cy="63.9" r="1.80"/><circle cx="238.0" cy="70.3" r="1.80"/><circle cx="183.5" cy="78.4" r="1.80"/><circle cx="186.7" cy="81.0" r="1.80"/><circle cx="191.5" cy="80.6" r="1.80"/><circle cx="197.7" cy="79.9" r="1.80"/><circle cx="201.2" cy="73.8" r="1.80"/><circle cx="200.9" cy="77.3" r="1.80"/><circle cx="208.2" cy="79.7" r="1.80"/><circle cx="210.2" cy="77.6" r="1.80"/><circle cx="219.8" cy="74.5" r="1.80"/><circle cx="227.2" cy="77.3" r="1.80"/><circle cx="214.0" cy="83.8" r="1.80"/><circle cx="181.3" cy="84.4" r="1.80"/><circle cx="253.1" cy="36.1" r="1.80"/><circle cx="268.5" cy="37.4" r="1.80"/><circle cx="282.6" cy="38.3" r="1.80"/><circle cx="291.6" cy="38.3" r="1.80"/><circle cx="305.7" cy="36.1" r="1.80"/><circle cx="323.7" cy="33.2" r="1.80"/><circle cx="251.8" cy="43.5" r="1.80"/><circle cx="257.8" cy="45.4" r="1.80"/><circle cx="257.3" cy="48.6" r="1.80"/><circle cx="252.4" cy="50.8" r="1.80"/><circle cx="266.3" cy="45.4" r="1.80"/><circle cx="270.6" cy="42.2" r="1.80"/><circle cx="272.3" cy="46.7" r="1.80"/><circle cx="269.1" cy="48.6" r="1.80"/><circle cx="268.5" cy="50.8" r="1.80"/><circle cx="284.5" cy="42.2" r="1.80"/><circle cx="284.5" cy="45.4" r="1.80"/><circle cx="292.9" cy="40.3" r="1.80"/><circle cx="300.2" cy="42.2" r="1.80"/><circle cx="315.7" cy="37.9" r="1.80"/><circle cx="325.3" cy="39.0" r="1.80"/><circle cx="258.2" cy="71.3" r="1.80"/><circle cx="291.6" cy="54.6" r="1.80"/><circle cx="342.6" cy="34.2" r="1.80"/><circle cx="357.6" cy="37.0" r="1.80"/><circle cx="381.6" cy="42.6" r="1.80"/><circle cx="389.0" cy="44.7" r="1.80"/><circle cx="354.1" cy="49.9" r="1.80"/><circle cx="335.4" cy="58.9" r="1.80"/><circle cx="377.5" cy="48.3" r="1.80"/><circle cx="379.4" cy="58.2" r="1.80"/><circle cx="352.8" cy="69.8" r="1.80"/><circle cx="369.8" cy="76.8" r="1.85"/><circle cx="382.4" cy="74.3" r="1.85"/><circle cx="406.9" cy="50.4" r="1.80"/><circle cx="425.2" cy="54.9" r="1.80"/><circle cx="449.8" cy="62.5" r="1.88"/><circle cx="483.2" cy="71.6" r="2.03"/><circle cx="412.0" cy="67.8" r="1.85"/><circle cx="443.8" cy="72.1" r="1.95"/><circle cx="423.8" cy="79.7" r="1.98"/><circle cx="400.8" cy="85.4" r="1.98"/><circle cx="419.3" cy="92.2" r="2.08"/><circle cx="398.9" cy="95.4" r="2.07"/><circle cx="434.5" cy="97.0" r="2.15"/><circle cx="475.9" cy="84.5" r="2.13"/><circle cx="427.3" cy="109.0" r="2.24"/><circle cx="477.5" cy="107.9" r="2.34"/><circle cx="503.7" cy="76.9" r="2.11"/><circle cx="526.3" cy="80.4" r="2.19"/><circle cx="546.7" cy="86.1" r="2.28"/><circle cx="593.5" cy="93.3" r="2.44"/><circle cx="587.8" cy="112.6" r="2.60"/><circle cx="563.4" cy="137.3" r="2.77"/><circle cx="502.0" cy="114.9" r="2.45"/><circle cx="506.0" cy="132.6" r="2.61"/><circle cx="515.7" cy="135.2" r="2.65"/><circle cx="562.7" cy="153.8" r="2.91"/><circle cx="554.1" cy="192.3" r="3.23"/><circle cx="532.3" cy="196.1" r="3.22"/><circle cx="516.9" cy="191.9" r="3.15"/><circle cx="515.0" cy="186.5" r="3.10"/><circle cx="486.0" cy="122.5" r="2.48"/><circle cx="485.1" cy="143.2" r="2.66"/><circle cx="503.8" cy="150.9" r="2.77"/><circle cx="481.2" cy="162.4" r="2.82"/><circle cx="506.3" cy="168.2" r="2.92"/><circle cx="475.5" cy="184.6" r="3.01"/><circle cx="365.2" cy="83.3" r="1.89"/><circle cx="362.5" cy="88.5" r="1.93"/><circle cx="373.0" cy="93.0" r="2.00"/><circle cx="367.7" cy="103.0" r="2.07"/><circle cx="466.6" cy="116.1" r="2.39"/><circle cx="397.2" cy="131.9" r="2.39"/><circle cx="390.9" cy="136.1" r="2.41"/><circle cx="383.7" cy="138.6" r="2.42"/><circle cx="395.3" cy="145.7" r="2.50"/><circle cx="400.5" cy="157.3" r="2.62"/><circle cx="421.7" cy="155.4" r="2.64"/><circle cx="455.8" cy="149.2" r="2.66"/><circle cx="357.2" cy="96.1" r="1.99"/><circle cx="351.4" cy="103.4" r="2.04"/><circle cx="357.6" cy="116.9" r="2.18"/><circle cx="328.3" cy="88.0" r="1.86"/><circle cx="339.3" cy="140.0" r="2.34"/><circle cx="218.2" cy="87.5" r="1.80"/><circle cx="207.0" cy="105.0" r="1.80"/><circle cx="239.8" cy="137.7" r="2.12"/><circle cx="318.4" cy="184.5" r="2.69"/><circle cx="348.7" cy="160.8" r="2.54"/><circle cx="236.0" cy="189.2" r="2.57"/><circle cx="182.0" cy="169.5" r="2.29"/><circle cx="195.6" cy="134.8" r="2.01"/><circle cx="197.0" cy="145.8" r="2.11"/><circle cx="191.3" cy="120.4" r="1.87"/><circle cx="201.4" cy="117.8" r="1.87"/><circle cx="199.1" cy="105.8" r="1.80"/><circle cx="185.1" cy="102.7" r="1.80"/><circle cx="180.6" cy="106.6" r="1.80"/><circle cx="196.1" cy="98.5" r="1.80"/><circle cx="202.0" cy="94.5" r="1.80"/><circle cx="184.9" cy="91.2" r="1.80"/><circle cx="184.2" cy="88.4" r="1.80"/><circle cx="213.8" cy="89.7" r="1.80"/><circle cx="98.1" cy="179.4" r="2.21"/><circle cx="78.6" cy="217.6" r="2.51"/><circle cx="140.4" cy="129.5" r="1.85"/><circle cx="161.7" cy="131.1" r="1.91"/><circle cx="126.9" cy="156.5" r="2.06"/><circle cx="151.6" cy="170.9" r="2.24"/><circle cx="156.1" cy="194.0" r="2.45"/><circle cx="113.4" cy="219.4" r="2.59"/><circle cx="133.6" cy="212.0" r="2.57"/><circle cx="142.2" cy="214.3" r="2.60"/><circle cx="171.8" cy="214.9" r="2.67"/><circle cx="52.1" cy="250.6" r="2.74"/><circle cx="106.7" cy="254.8" r="2.89"/><circle cx="137.6" cy="259.3" r="2.99"/><circle cx="140.6" cy="267.9" r="3.07"/><circle cx="145.1" cy="285.8" r="3.24"/><circle cx="167.9" cy="329.9" r="3.67"/><circle cx="85.1" cy="237.5" r="2.69"/><circle cx="164.9" cy="269.2" r="3.13"/><circle cx="240.1" cy="211.3" r="2.77"/><circle cx="276.7" cy="220.3" r="2.92"/><circle cx="222.8" cy="221.4" r="2.83"/><circle cx="227.3" cy="223.2" r="2.85"/><circle cx="235.2" cy="223.2" r="2.87"/><circle cx="219.9" cy="230.9" r="2.90"/><circle cx="199.7" cy="238.3" r="2.93"/><circle cx="211.6" cy="237.6" r="2.95"/><circle cx="234.0" cy="239.9" r="3.01"/><circle cx="197.4" cy="246.6" r="3.00"/><circle cx="235.6" cy="251.8" r="3.12"/><circle cx="195.8" cy="257.9" r="3.09"/><circle cx="201.0" cy="263.7" r="3.16"/><circle cx="210.4" cy="265.9" r="3.19"/><circle cx="225.0" cy="261.4" r="3.18"/><circle cx="222.8" cy="283.9" r="3.38"/><circle cx="235.4" cy="292.4" r="3.48"/><circle cx="280.1" cy="257.9" r="3.26"/><circle cx="282.3" cy="273.1" r="3.40"/><circle cx="282.4" cy="281.2" r="3.47"/><circle cx="392.0" cy="174.4" r="2.75"/><circle cx="381.2" cy="188.0" r="2.85"/><circle cx="411.1" cy="204.0" r="3.05"/><circle cx="315.6" cy="206.4" r="2.88"/><circle cx="329.9" cy="204.7" r="2.89"/><circle cx="391.3" cy="219.0" r="3.14"/><circle cx="357.8" cy="226.9" r="3.15"/><circle cx="405.6" cy="236.9" r="3.33"/><circle cx="409.9" cy="250.8" r="3.46"/><circle cx="329.9" cy="246.9" r="3.27"/><circle cx="343.0" cy="255.5" r="3.37"/><circle cx="348.3" cy="262.0" r="3.44"/><circle cx="426.2" cy="180.3" r="2.87"/><circle cx="454.9" cy="182.6" r="2.95"/><circle cx="426.2" cy="211.1" r="3.14"/><circle cx="453.8" cy="225.3" r="3.32"/><circle cx="465.7" cy="234.3" r="3.43"/><circle cx="282.3" cy="111.7" r="2.60"/></g>
</svg>
</div>
<!-- status bar -->
<div class="a" style="left:7px;top:514px;width:609px;height:1px;background:#919191;"></div>
<div class="a" style="left:7px;top:515px;width:609px;height:23px;background:#fff;"></div>
<div class="a" style="left:8px;top:516px;width:607px;height:21px;background:#f0edeb;"></div>
<svg style="left:600px;top:522px" width="16" height="16" shape-rendering="crispEdges"><rect x="11" y="6" width="1" height="1" fill="#fff"/><rect x="12" y="7" width="1" height="1" fill="#8a8a8a"/><rect x="8" y="9" width="1" height="1" fill="#fff"/><rect x="9" y="10" width="1" height="1" fill="#8a8a8a"/><rect x="11" y="9" width="1" height="1" fill="#fff"/><rect x="12" y="10" width="1" height="1" fill="#8a8a8a"/><rect x="5" y="12" width="1" height="1" fill="#fff"/><rect x="6" y="13" width="1" height="1" fill="#8a8a8a"/><rect x="8" y="12" width="1" height="1" fill="#fff"/><rect x="9" y="13" width="1" height="1" fill="#8a8a8a"/><rect x="11" y="12" width="1" height="1" fill="#fff"/><rect x="12" y="13" width="1" height="1" fill="#8a8a8a"/></svg>

<div class="t" style="left:50.40px;top:12.84px;font-size:12px;line-height:12px;letter-spacing:-0.162px;color:#1c1c1c;">DgmViewer</div>
<div class="t" style="left:78.00px;top:38.97px;font-size:11.5px;line-height:11.5px;letter-spacing:-0.195px;color:#111;-webkit-text-stroke:0.25px #111;">Anzeige</div>
<div class="t" style="left:150.70px;top:39.07px;font-size:11.5px;line-height:11.5px;letter-spacing:0.084px;color:#111;-webkit-text-stroke:0.25px #111;">Maussteuerung</div>
<div class="t" style="left:553.20px;top:38.87px;font-size:11.5px;line-height:11.5px;letter-spacing:-0.572px;color:#111;-webkit-text-stroke:0.25px #111;">Style</div>
<div class="t" style="left:38.60px;top:65.07px;font-size:11.5px;line-height:11.5px;letter-spacing:-0.480px;color:#7a82a8;">Fläche</div>
<div class="t" style="left:38.60px;top:87.07px;font-size:11.5px;line-height:11.5px;letter-spacing:-0.017px;color:#7a82a8;">Bruchkanten</div>
<div class="t" style="left:132.40px;top:65.07px;font-size:11.5px;line-height:11.5px;letter-spacing:-0.092px;color:#7a82a8;">Vermaschung</div>
<div class="t" style="left:132.40px;top:87.07px;font-size:11.5px;line-height:11.5px;letter-spacing:-0.105px;color:#7a82a8;">Punkte</div>
<div class="t" style="left:209.60px;top:65.37px;font-size:11.5px;line-height:11.5px;letter-spacing:0.288px;color:#747486;">Überhöhung</div>
<div class="t" style="left:229.60px;top:86.77px;font-size:11.5px;line-height:11.5px;letter-spacing:0.344px;color:#7a82a8;">Optionen</div>
<div class="t" style="left:229.60px;top:108.97px;font-size:11.5px;line-height:11.5px;letter-spacing:-0.221px;color:#7a82a8;">Screenshot</div>
<div class="t" style="left:143.30px;top:130.67px;font-size:11.5px;line-height:11.5px;letter-spacing:-0.245px;color:#8890ac;">Anzeige</div>
<div class="t" style="left:334.40px;top:130.37px;font-size:11.5px;line-height:11.5px;letter-spacing:0.085px;color:#8890ac;">Navigation</div>
<div class="t" style="left:281.50px;top:65.57px;font-size:11.5px;line-height:11.5px;letter-spacing:0.000px;color:#000;">1</div>
</body></html>
